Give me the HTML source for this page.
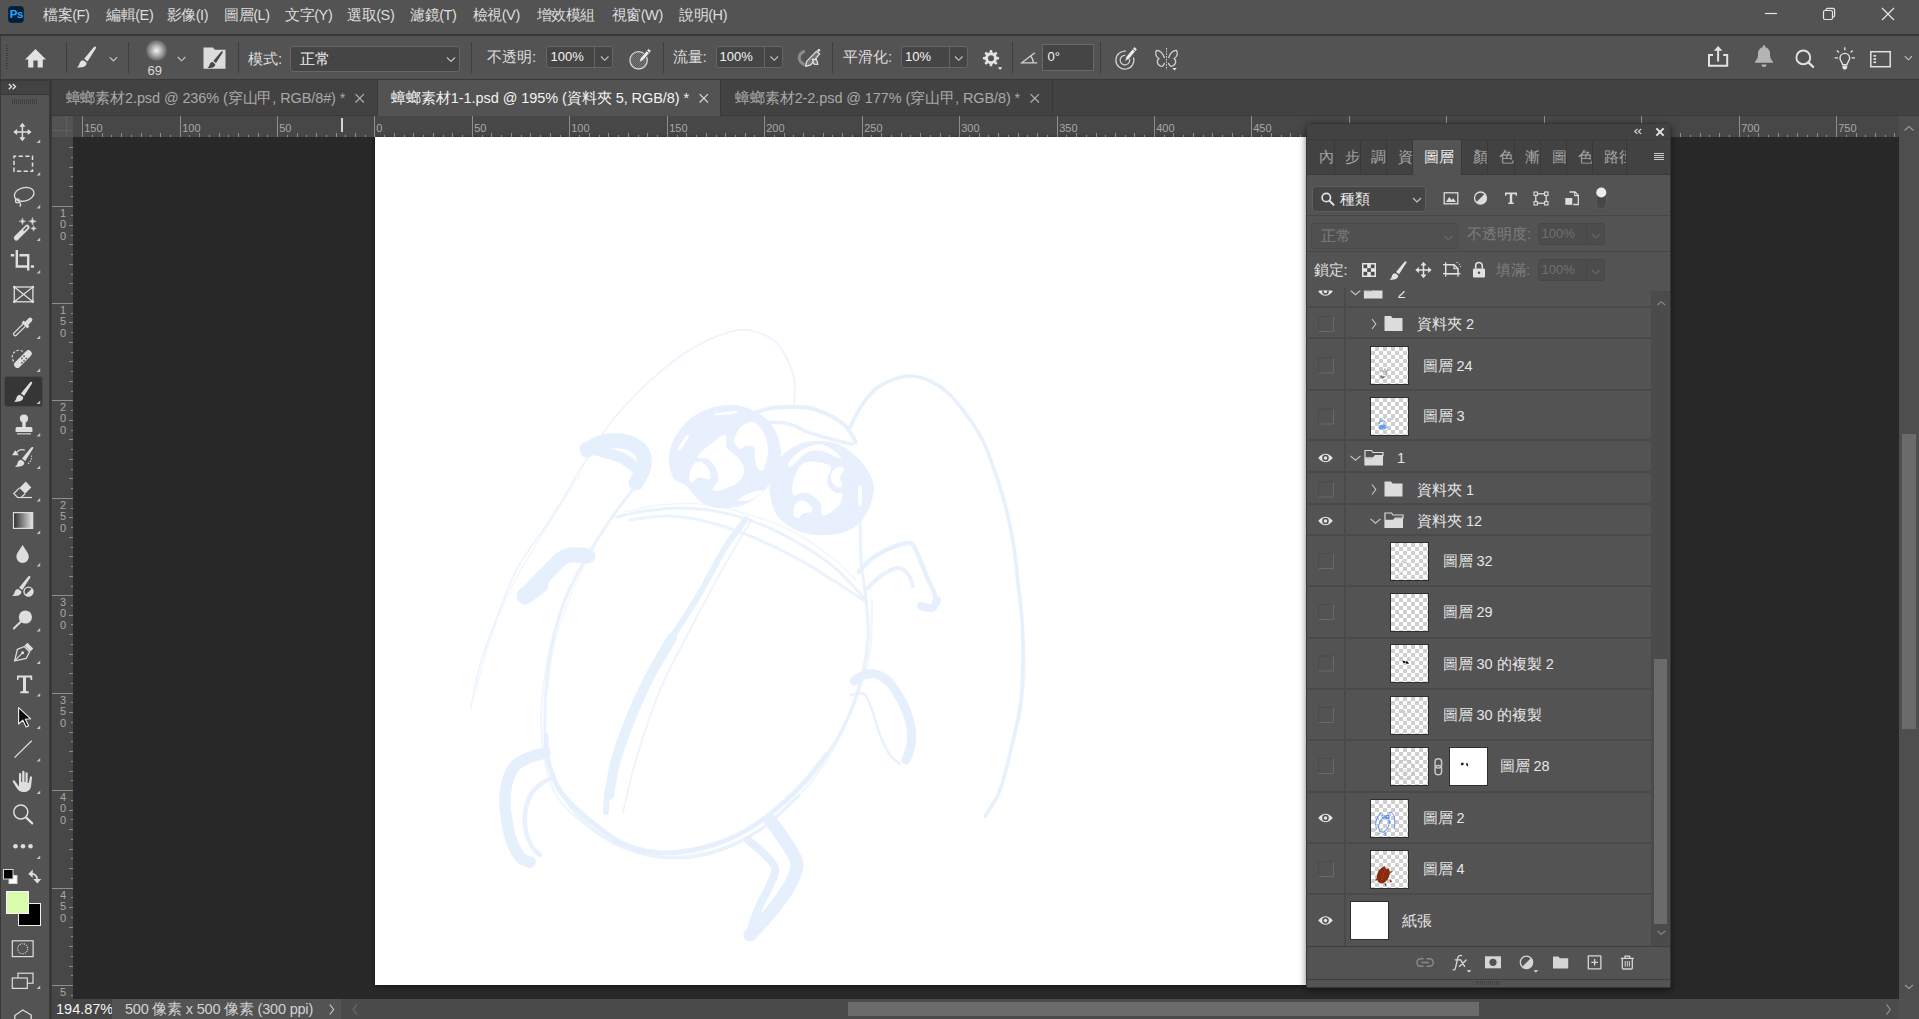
<!DOCTYPE html>
<html lang="zh-Hant"><head><meta charset="utf-8"><title>Photoshop</title>
<style>
html,body{margin:0;padding:0}
body{width:1919px;height:1019px;overflow:hidden;background:#282828;position:relative;
 font-family:"Liberation Sans",sans-serif;}
#app{position:absolute;left:0;top:0;width:1919px;height:1019px;overflow:hidden}
#app div{position:absolute;box-sizing:border-box}
#app .t{white-space:nowrap;}
#app .t .c{display:inline-block;white-space:nowrap;}
#ico,#app .ov{position:absolute;left:0;top:0;pointer-events:none}
</style></head>
<body>
<div id="app">
<div style="left:0px;top:0px;width:1919px;height:34px;background:#535353;"></div>
<div style="left:0px;top:34px;width:1919px;height:2px;background:#383838;"></div>
<div style="left:0px;top:36px;width:1919px;height:43px;background:#535353;"></div>
<div style="left:0px;top:36px;width:1px;height:43px;background:#3e3e3e;"></div>
<div style="left:0px;top:79px;width:1919px;height:1px;background:#383838;"></div>
<div style="left:0px;top:80px;width:1919px;height:36px;background:#424242;"></div>
<div style="left:0px;top:80px;width:52px;height:939px;background:#383838;"></div>
<div style="left:1px;top:81px;width:48px;height:13px;background:#424242;"></div>
<div style="left:1px;top:95px;width:48px;height:924px;background:#535353;"></div>
<div style="left:52px;top:116px;width:1847px;height:21px;background:#474747;"></div>
<div style="left:52px;top:137px;width:21px;height:862px;background:#474747;"></div>
<div style="left:52px;top:116px;width:21px;height:21px;background:#535353;"></div>
<div style="left:73px;top:137px;width:1826px;height:862px;background:#282828;"></div>
<div style="left:375px;top:137px;width:931px;height:848px;background:#ffffff;box-shadow:0 1px 4px rgba(0,0,0,.55);"></div>
<div style="left:1899px;top:116px;width:20px;height:883px;background:#4e4e4e;"></div>
<div style="left:1902px;top:434px;width:14px;height:295px;background:#6b6b6b;"></div>
<div style="left:52px;top:999px;width:1867px;height:20px;background:#535353;"></div>
<div style="left:52px;top:999px;width:60px;height:20px;background:#454545;"></div>
<div style="left:341px;top:999px;width:1558px;height:20px;background:#4b4b4b;"></div>
<div style="left:848px;top:1002px;width:631px;height:14px;background:#6b6b6b;"></div>
<div style="left:1899px;top:999px;width:20px;height:20px;background:#505050;"></div>
<div style="left:7.7px;top:6px;width:16.8px;height:17px;background:#001e36;border-radius:3.5px;border:1px solid #0a2a45"></div>
<div class="t" style="left:9.8px;top:7px;font-size:11.5px;line-height:15px;color:#31a8ff;font-weight:bold;letter-spacing:-0.5px;">Ps</div>
<div class="t" style="left:43px;top:5px;font-size:14.5px;line-height:21px;color:#dddddd;letter-spacing:-0.4px;"><span class="c" style="width:29.20px">檔案</span>(F)</div>
<div class="t" style="left:106px;top:5px;font-size:14.5px;line-height:21px;color:#dddddd;letter-spacing:-0.4px;"><span class="c" style="width:29.20px">編輯</span>(E)</div>
<div class="t" style="left:166.5px;top:5px;font-size:14.5px;line-height:21px;color:#dddddd;letter-spacing:-0.4px;"><span class="c" style="width:29.20px">影像</span>(I)</div>
<div class="t" style="left:224px;top:5px;font-size:14.5px;line-height:21px;color:#dddddd;letter-spacing:-0.4px;"><span class="c" style="width:29.20px">圖層</span>(L)</div>
<div class="t" style="left:285px;top:5px;font-size:14.5px;line-height:21px;color:#dddddd;letter-spacing:-0.4px;"><span class="c" style="width:29.20px">文字</span>(Y)</div>
<div class="t" style="left:347px;top:5px;font-size:14.5px;line-height:21px;color:#dddddd;letter-spacing:-0.4px;"><span class="c" style="width:29.20px">選取</span>(S)</div>
<div class="t" style="left:410px;top:5px;font-size:14.5px;line-height:21px;color:#dddddd;letter-spacing:-0.4px;"><span class="c" style="width:29.20px">濾鏡</span>(T)</div>
<div class="t" style="left:472.5px;top:5px;font-size:14.5px;line-height:21px;color:#dddddd;letter-spacing:-0.4px;"><span class="c" style="width:29.20px">檢視</span>(V)</div>
<div class="t" style="left:536.5px;top:5px;font-size:14.5px;line-height:21px;color:#dddddd;letter-spacing:-0.4px;"><span class="c" style="width:58.40px">增效模組</span></div>
<div class="t" style="left:611.5px;top:5px;font-size:14.5px;line-height:21px;color:#dddddd;letter-spacing:-0.4px;"><span class="c" style="width:29.20px">視窗</span>(W)</div>
<div class="t" style="left:679px;top:5px;font-size:14.5px;line-height:21px;color:#dddddd;letter-spacing:-0.4px;"><span class="c" style="width:29.20px">說明</span>(H)</div>
<div style="left:66px;top:42px;width:1px;height:31px;background:#3d3d3d;"></div>
<div style="left:128px;top:42px;width:1px;height:31px;background:#3d3d3d;"></div>
<div style="left:238px;top:42px;width:1px;height:31px;background:#3d3d3d;"></div>
<div style="left:471px;top:42px;width:1px;height:31px;background:#3d3d3d;"></div>
<div style="left:663px;top:42px;width:1px;height:31px;background:#3d3d3d;"></div>
<div style="left:832px;top:42px;width:1px;height:31px;background:#3d3d3d;"></div>
<div style="left:1012px;top:42px;width:1px;height:31px;background:#3d3d3d;"></div>
<div style="left:1100px;top:42px;width:1px;height:31px;background:#3d3d3d;"></div>
<div style="left:146px;top:40px;width:21px;height:21px;border-radius:50%;background:radial-gradient(circle at 50% 50%,#f2f2f2 0%,#bdbdbd 28%,#7c7c7c 58%,#535353 78%)"></div>
<div class="t" style="left:147.6px;top:63.5px;font-size:13px;line-height:14px;color:#dcdcdc;">69</div>
<div class="t" style="left:248px;top:49px;font-size:15px;line-height:20px;color:#dddddd;"><span class="c" style="width:30.00px">模式</span>:</div>
<div style="left:290px;top:46px;width:170px;height:26px;background:#454545;border:1px solid #666666;border-radius:3px"></div>
<div class="t" style="left:300px;top:49px;font-size:15px;line-height:20px;color:#f0f0f0;"><span class="c" style="width:30.00px">正常</span></div>
<div class="t" style="left:487px;top:47px;font-size:15px;line-height:20px;color:#dddddd;"><span class="c" style="width:45.00px">不透明</span>:</div>
<div style="left:546px;top:46px;width:67px;height:22px;background:#454545;border:1px solid #666666;border-radius:3px"></div>
<div style="left:594px;top:47px;width:1px;height:20px;background:#666666;"></div>
<div class="t" style="left:550.5px;top:49px;font-size:13px;line-height:16px;color:#f4f4f4;">100%</div>
<div class="t" style="left:672.5px;top:47px;font-size:15px;line-height:20px;color:#dddddd;"><span class="c" style="width:30.00px">流量</span>:</div>
<div style="left:716px;top:46px;width:67px;height:22px;background:#454545;border:1px solid #666666;border-radius:3px"></div>
<div style="left:764px;top:47px;width:1px;height:20px;background:#666666;"></div>
<div class="t" style="left:719.5px;top:49px;font-size:13px;line-height:16px;color:#f4f4f4;">100%</div>
<div class="t" style="left:843px;top:47px;font-size:15px;line-height:20px;color:#dddddd;"><span class="c" style="width:45.00px">平滑化</span>:</div>
<div style="left:901px;top:46px;width:67px;height:22px;background:#454545;border:1px solid #666666;border-radius:3px"></div>
<div style="left:949px;top:47px;width:1px;height:20px;background:#666666;"></div>
<div class="t" style="left:905px;top:49px;font-size:13px;line-height:16px;color:#f4f4f4;">10%</div>
<div style="left:1042px;top:44px;width:52px;height:27px;background:#454545;border:1px solid #686868"></div>
<div class="t" style="left:1047.5px;top:49px;font-size:13px;line-height:16px;color:#f4f4f4;">0°</div>
<div style="left:52px;top:80px;width:326px;height:36px;background:#424242;"></div>
<div style="left:377px;top:80px;width:1px;height:36px;background:#3a3a3a;"></div>
<div style="left:378px;top:80px;width:342px;height:36px;background:#535353;"></div>
<div style="left:720px;top:80px;width:1px;height:36px;background:#3a3a3a;"></div>
<div style="left:1052px;top:80px;width:1px;height:36px;background:#3a3a3a;"></div>
<div style="left:52px;top:115px;width:326px;height:1px;background:#3a3a3a;"></div>
<div style="left:720px;top:115px;width:1199px;height:1px;background:#3a3a3a;"></div>
<div class="t" style="left:65.5px;top:88px;font-size:14.5px;line-height:21px;color:#a9a9a9;letter-spacing:-0.11px;"><span class="c" style="width:59.56px">蟑螂素材</span>2.psd @ 236% (<span class="c" style="width:44.67px">穿山甲</span>, RGB/8#) *</div>
<div class="t" style="left:391px;top:88px;font-size:14.5px;line-height:21px;color:#f2f2f2;letter-spacing:-0.06px;"><span class="c" style="width:59.76px">蟑螂素材</span>1-1.psd @ 195% (<span class="c" style="width:44.82px">資料夾</span> 5, RGB/8) *</div>
<div class="t" style="left:735px;top:88px;font-size:14.5px;line-height:21px;color:#a9a9a9;letter-spacing:-0.09px;"><span class="c" style="width:59.64px">蟑螂素材</span>2-2.psd @ 177% (<span class="c" style="width:44.73px">穿山甲</span>, RGB/8) *</div>
<div class="t" style="left:84.2px;top:122px;font-size:11px;line-height:12px;color:#a8a8a8;">150</div>
<div class="t" style="left:182.2px;top:122px;font-size:11px;line-height:12px;color:#a8a8a8;">100</div>
<div class="t" style="left:279.2px;top:122px;font-size:11px;line-height:12px;color:#a8a8a8;">50</div>
<div class="t" style="left:376.2px;top:122px;font-size:11px;line-height:12px;color:#a8a8a8;">0</div>
<div class="t" style="left:474.2px;top:122px;font-size:11px;line-height:12px;color:#a8a8a8;">50</div>
<div class="t" style="left:571.2px;top:122px;font-size:11px;line-height:12px;color:#a8a8a8;">100</div>
<div class="t" style="left:669.2px;top:122px;font-size:11px;line-height:12px;color:#a8a8a8;">150</div>
<div class="t" style="left:766.2px;top:122px;font-size:11px;line-height:12px;color:#a8a8a8;">200</div>
<div class="t" style="left:864.2px;top:122px;font-size:11px;line-height:12px;color:#a8a8a8;">250</div>
<div class="t" style="left:961.2px;top:122px;font-size:11px;line-height:12px;color:#a8a8a8;">300</div>
<div class="t" style="left:1059.2px;top:122px;font-size:11px;line-height:12px;color:#a8a8a8;">350</div>
<div class="t" style="left:1156.2px;top:122px;font-size:11px;line-height:12px;color:#a8a8a8;">400</div>
<div class="t" style="left:1253.2px;top:122px;font-size:11px;line-height:12px;color:#a8a8a8;">450</div>
<div class="t" style="left:1741.2px;top:122px;font-size:11px;line-height:12px;color:#a8a8a8;">700</div>
<div class="t" style="left:1838.2px;top:122px;font-size:11px;line-height:12px;color:#a8a8a8;">750</div>
<div class="t" style="left:59px;top:206.5px;font-size:11px;line-height:12px;color:#a8a8a8;width:8px;text-align:center;">1</div>
<div class="t" style="left:59px;top:218.0px;font-size:11px;line-height:12px;color:#a8a8a8;width:8px;text-align:center;">0</div>
<div class="t" style="left:59px;top:229.5px;font-size:11px;line-height:12px;color:#a8a8a8;width:8px;text-align:center;">0</div>
<div class="t" style="left:59px;top:303.5px;font-size:11px;line-height:12px;color:#a8a8a8;width:8px;text-align:center;">1</div>
<div class="t" style="left:59px;top:315.0px;font-size:11px;line-height:12px;color:#a8a8a8;width:8px;text-align:center;">5</div>
<div class="t" style="left:59px;top:326.5px;font-size:11px;line-height:12px;color:#a8a8a8;width:8px;text-align:center;">0</div>
<div class="t" style="left:59px;top:400.5px;font-size:11px;line-height:12px;color:#a8a8a8;width:8px;text-align:center;">2</div>
<div class="t" style="left:59px;top:412.0px;font-size:11px;line-height:12px;color:#a8a8a8;width:8px;text-align:center;">0</div>
<div class="t" style="left:59px;top:423.5px;font-size:11px;line-height:12px;color:#a8a8a8;width:8px;text-align:center;">0</div>
<div class="t" style="left:59px;top:498.5px;font-size:11px;line-height:12px;color:#a8a8a8;width:8px;text-align:center;">2</div>
<div class="t" style="left:59px;top:510.0px;font-size:11px;line-height:12px;color:#a8a8a8;width:8px;text-align:center;">5</div>
<div class="t" style="left:59px;top:521.5px;font-size:11px;line-height:12px;color:#a8a8a8;width:8px;text-align:center;">0</div>
<div class="t" style="left:59px;top:595.5px;font-size:11px;line-height:12px;color:#a8a8a8;width:8px;text-align:center;">3</div>
<div class="t" style="left:59px;top:607.0px;font-size:11px;line-height:12px;color:#a8a8a8;width:8px;text-align:center;">0</div>
<div class="t" style="left:59px;top:618.5px;font-size:11px;line-height:12px;color:#a8a8a8;width:8px;text-align:center;">0</div>
<div class="t" style="left:59px;top:693.5px;font-size:11px;line-height:12px;color:#a8a8a8;width:8px;text-align:center;">3</div>
<div class="t" style="left:59px;top:705.0px;font-size:11px;line-height:12px;color:#a8a8a8;width:8px;text-align:center;">5</div>
<div class="t" style="left:59px;top:716.5px;font-size:11px;line-height:12px;color:#a8a8a8;width:8px;text-align:center;">0</div>
<div class="t" style="left:59px;top:790.5px;font-size:11px;line-height:12px;color:#a8a8a8;width:8px;text-align:center;">4</div>
<div class="t" style="left:59px;top:802.0px;font-size:11px;line-height:12px;color:#a8a8a8;width:8px;text-align:center;">0</div>
<div class="t" style="left:59px;top:813.5px;font-size:11px;line-height:12px;color:#a8a8a8;width:8px;text-align:center;">0</div>
<div class="t" style="left:59px;top:888.5px;font-size:11px;line-height:12px;color:#a8a8a8;width:8px;text-align:center;">4</div>
<div class="t" style="left:59px;top:900.0px;font-size:11px;line-height:12px;color:#a8a8a8;width:8px;text-align:center;">5</div>
<div class="t" style="left:59px;top:911.5px;font-size:11px;line-height:12px;color:#a8a8a8;width:8px;text-align:center;">0</div>
<div class="t" style="left:59px;top:985.5px;font-size:11px;line-height:12px;color:#a8a8a8;width:8px;text-align:center;">5</div>
<svg class="ov" width="1919" height="1019" viewBox="0 0 1919 1019"><g fill="#8e8e8e"><rect x="82" y="116" width="1" height="21"/><rect x="92" y="135" width="1" height="2"/><rect x="102" y="133" width="1" height="4"/><rect x="111" y="135" width="1" height="2"/><rect x="121" y="133" width="1" height="4"/><rect x="131" y="135" width="1" height="2"/><rect x="141" y="133" width="1" height="4"/><rect x="150" y="135" width="1" height="2"/><rect x="160" y="133" width="1" height="4"/><rect x="170" y="135" width="1" height="2"/><rect x="180" y="116" width="1" height="21"/><rect x="189" y="135" width="1" height="2"/><rect x="199" y="133" width="1" height="4"/><rect x="209" y="135" width="1" height="2"/><rect x="219" y="133" width="1" height="4"/><rect x="228" y="135" width="1" height="2"/><rect x="238" y="133" width="1" height="4"/><rect x="248" y="135" width="1" height="2"/><rect x="258" y="133" width="1" height="4"/><rect x="267" y="135" width="1" height="2"/><rect x="277" y="116" width="1" height="21"/><rect x="287" y="135" width="1" height="2"/><rect x="297" y="133" width="1" height="4"/><rect x="306" y="135" width="1" height="2"/><rect x="316" y="133" width="1" height="4"/><rect x="326" y="135" width="1" height="2"/><rect x="336" y="133" width="1" height="4"/><rect x="345" y="135" width="1" height="2"/><rect x="355" y="133" width="1" height="4"/><rect x="365" y="135" width="1" height="2"/><rect x="374" y="116" width="1" height="21"/><rect x="384" y="135" width="1" height="2"/><rect x="394" y="133" width="1" height="4"/><rect x="404" y="135" width="1" height="2"/><rect x="413" y="133" width="1" height="4"/><rect x="423" y="135" width="1" height="2"/><rect x="433" y="133" width="1" height="4"/><rect x="443" y="135" width="1" height="2"/><rect x="452" y="133" width="1" height="4"/><rect x="462" y="135" width="1" height="2"/><rect x="472" y="116" width="1" height="21"/><rect x="482" y="135" width="1" height="2"/><rect x="491" y="133" width="1" height="4"/><rect x="501" y="135" width="1" height="2"/><rect x="511" y="133" width="1" height="4"/><rect x="521" y="135" width="1" height="2"/><rect x="530" y="133" width="1" height="4"/><rect x="540" y="135" width="1" height="2"/><rect x="550" y="133" width="1" height="4"/><rect x="560" y="135" width="1" height="2"/><rect x="569" y="116" width="1" height="21"/><rect x="579" y="135" width="1" height="2"/><rect x="589" y="133" width="1" height="4"/><rect x="599" y="135" width="1" height="2"/><rect x="608" y="133" width="1" height="4"/><rect x="618" y="135" width="1" height="2"/><rect x="628" y="133" width="1" height="4"/><rect x="638" y="135" width="1" height="2"/><rect x="647" y="133" width="1" height="4"/><rect x="657" y="135" width="1" height="2"/><rect x="667" y="116" width="1" height="21"/><rect x="677" y="135" width="1" height="2"/><rect x="686" y="133" width="1" height="4"/><rect x="696" y="135" width="1" height="2"/><rect x="706" y="133" width="1" height="4"/><rect x="716" y="135" width="1" height="2"/><rect x="725" y="133" width="1" height="4"/><rect x="735" y="135" width="1" height="2"/><rect x="745" y="133" width="1" height="4"/><rect x="754" y="135" width="1" height="2"/><rect x="764" y="116" width="1" height="21"/><rect x="774" y="135" width="1" height="2"/><rect x="784" y="133" width="1" height="4"/><rect x="793" y="135" width="1" height="2"/><rect x="803" y="133" width="1" height="4"/><rect x="813" y="135" width="1" height="2"/><rect x="823" y="133" width="1" height="4"/><rect x="832" y="135" width="1" height="2"/><rect x="842" y="133" width="1" height="4"/><rect x="852" y="135" width="1" height="2"/><rect x="862" y="116" width="1" height="21"/><rect x="871" y="135" width="1" height="2"/><rect x="881" y="133" width="1" height="4"/><rect x="891" y="135" width="1" height="2"/><rect x="901" y="133" width="1" height="4"/><rect x="910" y="135" width="1" height="2"/><rect x="920" y="133" width="1" height="4"/><rect x="930" y="135" width="1" height="2"/><rect x="940" y="133" width="1" height="4"/><rect x="949" y="135" width="1" height="2"/><rect x="959" y="116" width="1" height="21"/><rect x="969" y="135" width="1" height="2"/><rect x="979" y="133" width="1" height="4"/><rect x="988" y="135" width="1" height="2"/><rect x="998" y="133" width="1" height="4"/><rect x="1008" y="135" width="1" height="2"/><rect x="1018" y="133" width="1" height="4"/><rect x="1027" y="135" width="1" height="2"/><rect x="1037" y="133" width="1" height="4"/><rect x="1047" y="135" width="1" height="2"/><rect x="1057" y="116" width="1" height="21"/><rect x="1066" y="135" width="1" height="2"/><rect x="1076" y="133" width="1" height="4"/><rect x="1086" y="135" width="1" height="2"/><rect x="1096" y="133" width="1" height="4"/><rect x="1105" y="135" width="1" height="2"/><rect x="1115" y="133" width="1" height="4"/><rect x="1125" y="135" width="1" height="2"/><rect x="1134" y="133" width="1" height="4"/><rect x="1144" y="135" width="1" height="2"/><rect x="1154" y="116" width="1" height="21"/><rect x="1164" y="135" width="1" height="2"/><rect x="1173" y="133" width="1" height="4"/><rect x="1183" y="135" width="1" height="2"/><rect x="1193" y="133" width="1" height="4"/><rect x="1203" y="135" width="1" height="2"/><rect x="1212" y="133" width="1" height="4"/><rect x="1222" y="135" width="1" height="2"/><rect x="1232" y="133" width="1" height="4"/><rect x="1242" y="135" width="1" height="2"/><rect x="1251" y="116" width="1" height="21"/><rect x="1261" y="135" width="1" height="2"/><rect x="1271" y="133" width="1" height="4"/><rect x="1281" y="135" width="1" height="2"/><rect x="1290" y="133" width="1" height="4"/><rect x="1300" y="135" width="1" height="2"/><rect x="1310" y="133" width="1" height="4"/><rect x="1320" y="135" width="1" height="2"/><rect x="1329" y="133" width="1" height="4"/><rect x="1339" y="135" width="1" height="2"/><rect x="1349" y="116" width="1" height="21"/><rect x="1359" y="135" width="1" height="2"/><rect x="1368" y="133" width="1" height="4"/><rect x="1378" y="135" width="1" height="2"/><rect x="1388" y="133" width="1" height="4"/><rect x="1398" y="135" width="1" height="2"/><rect x="1407" y="133" width="1" height="4"/><rect x="1417" y="135" width="1" height="2"/><rect x="1427" y="133" width="1" height="4"/><rect x="1437" y="135" width="1" height="2"/><rect x="1446" y="116" width="1" height="21"/><rect x="1456" y="135" width="1" height="2"/><rect x="1466" y="133" width="1" height="4"/><rect x="1476" y="135" width="1" height="2"/><rect x="1485" y="133" width="1" height="4"/><rect x="1495" y="135" width="1" height="2"/><rect x="1505" y="133" width="1" height="4"/><rect x="1514" y="135" width="1" height="2"/><rect x="1524" y="133" width="1" height="4"/><rect x="1534" y="135" width="1" height="2"/><rect x="1544" y="116" width="1" height="21"/><rect x="1553" y="135" width="1" height="2"/><rect x="1563" y="133" width="1" height="4"/><rect x="1573" y="135" width="1" height="2"/><rect x="1583" y="133" width="1" height="4"/><rect x="1592" y="135" width="1" height="2"/><rect x="1602" y="133" width="1" height="4"/><rect x="1612" y="135" width="1" height="2"/><rect x="1622" y="133" width="1" height="4"/><rect x="1631" y="135" width="1" height="2"/><rect x="1641" y="116" width="1" height="21"/><rect x="1651" y="135" width="1" height="2"/><rect x="1661" y="133" width="1" height="4"/><rect x="1670" y="135" width="1" height="2"/><rect x="1680" y="133" width="1" height="4"/><rect x="1690" y="135" width="1" height="2"/><rect x="1700" y="133" width="1" height="4"/><rect x="1709" y="135" width="1" height="2"/><rect x="1719" y="133" width="1" height="4"/><rect x="1729" y="135" width="1" height="2"/><rect x="1739" y="116" width="1" height="21"/><rect x="1748" y="135" width="1" height="2"/><rect x="1758" y="133" width="1" height="4"/><rect x="1768" y="135" width="1" height="2"/><rect x="1778" y="133" width="1" height="4"/><rect x="1787" y="135" width="1" height="2"/><rect x="1797" y="133" width="1" height="4"/><rect x="1807" y="135" width="1" height="2"/><rect x="1817" y="133" width="1" height="4"/><rect x="1826" y="135" width="1" height="2"/><rect x="1836" y="116" width="1" height="21"/><rect x="1846" y="135" width="1" height="2"/><rect x="1856" y="133" width="1" height="4"/><rect x="1865" y="135" width="1" height="2"/><rect x="1875" y="133" width="1" height="4"/><rect x="1885" y="135" width="1" height="2"/><rect x="1894" y="133" width="1" height="4"/><rect x="69" y="147" width="4" height="1"/><rect x="71" y="157" width="2" height="1"/><rect x="69" y="167" width="4" height="1"/><rect x="71" y="176" width="2" height="1"/><rect x="69" y="186" width="4" height="1"/><rect x="71" y="196" width="2" height="1"/><rect x="52" y="206" width="21" height="1"/><rect x="71" y="215" width="2" height="1"/><rect x="69" y="225" width="4" height="1"/><rect x="71" y="235" width="2" height="1"/><rect x="69" y="244" width="4" height="1"/><rect x="71" y="254" width="2" height="1"/><rect x="69" y="264" width="4" height="1"/><rect x="71" y="274" width="2" height="1"/><rect x="69" y="283" width="4" height="1"/><rect x="71" y="293" width="2" height="1"/><rect x="52" y="303" width="21" height="1"/><rect x="71" y="313" width="2" height="1"/><rect x="69" y="322" width="4" height="1"/><rect x="71" y="332" width="2" height="1"/><rect x="69" y="342" width="4" height="1"/><rect x="71" y="352" width="2" height="1"/><rect x="69" y="361" width="4" height="1"/><rect x="71" y="371" width="2" height="1"/><rect x="69" y="381" width="4" height="1"/><rect x="71" y="391" width="2" height="1"/><rect x="52" y="400" width="21" height="1"/><rect x="71" y="410" width="2" height="1"/><rect x="69" y="420" width="4" height="1"/><rect x="71" y="430" width="2" height="1"/><rect x="69" y="439" width="4" height="1"/><rect x="71" y="449" width="2" height="1"/><rect x="69" y="459" width="4" height="1"/><rect x="71" y="469" width="2" height="1"/><rect x="69" y="478" width="4" height="1"/><rect x="71" y="488" width="2" height="1"/><rect x="52" y="498" width="21" height="1"/><rect x="71" y="508" width="2" height="1"/><rect x="69" y="517" width="4" height="1"/><rect x="71" y="527" width="2" height="1"/><rect x="69" y="537" width="4" height="1"/><rect x="71" y="547" width="2" height="1"/><rect x="69" y="556" width="4" height="1"/><rect x="71" y="566" width="2" height="1"/><rect x="69" y="576" width="4" height="1"/><rect x="71" y="586" width="2" height="1"/><rect x="52" y="595" width="21" height="1"/><rect x="71" y="605" width="2" height="1"/><rect x="69" y="615" width="4" height="1"/><rect x="71" y="624" width="2" height="1"/><rect x="69" y="634" width="4" height="1"/><rect x="71" y="644" width="2" height="1"/><rect x="69" y="654" width="4" height="1"/><rect x="71" y="663" width="2" height="1"/><rect x="69" y="673" width="4" height="1"/><rect x="71" y="683" width="2" height="1"/><rect x="52" y="693" width="21" height="1"/><rect x="71" y="702" width="2" height="1"/><rect x="69" y="712" width="4" height="1"/><rect x="71" y="722" width="2" height="1"/><rect x="69" y="732" width="4" height="1"/><rect x="71" y="741" width="2" height="1"/><rect x="69" y="751" width="4" height="1"/><rect x="71" y="761" width="2" height="1"/><rect x="69" y="771" width="4" height="1"/><rect x="71" y="780" width="2" height="1"/><rect x="52" y="790" width="21" height="1"/><rect x="71" y="800" width="2" height="1"/><rect x="69" y="810" width="4" height="1"/><rect x="71" y="819" width="2" height="1"/><rect x="69" y="829" width="4" height="1"/><rect x="71" y="839" width="2" height="1"/><rect x="69" y="849" width="4" height="1"/><rect x="71" y="858" width="2" height="1"/><rect x="69" y="868" width="4" height="1"/><rect x="71" y="878" width="2" height="1"/><rect x="52" y="888" width="21" height="1"/><rect x="71" y="897" width="2" height="1"/><rect x="69" y="907" width="4" height="1"/><rect x="71" y="917" width="2" height="1"/><rect x="69" y="927" width="4" height="1"/><rect x="71" y="936" width="2" height="1"/><rect x="69" y="946" width="4" height="1"/><rect x="71" y="956" width="2" height="1"/><rect x="69" y="966" width="4" height="1"/><rect x="71" y="975" width="2" height="1"/><rect x="52" y="985" width="21" height="1"/><rect x="71" y="995" width="2" height="1"/></g></svg>
<div style="left:341px;top:118px;width:2px;height:14px;background:#d4d4d4;"></div>
<div class="t" style="left:56px;top:999px;font-size:14.5px;line-height:20px;color:#f4f4f4;width:55.5px;overflow:hidden;">194.87%</div>
<div class="t" style="left:125px;top:999px;font-size:14.5px;line-height:20px;color:#d2d2d2;letter-spacing:-0.2px;">500 <span class="c" style="width:29.60px">像素</span> x 500 <span class="c" style="width:29.60px">像素</span> (300 ppi)</div>
<svg class="ov" width="1919" height="1019" viewBox="0 0 1919 1019"><g fill="none" stroke="#e6f0fc" stroke-linecap="round" stroke-linejoin="round"><path d="M471 708C472.5 700.8 475.7 680.2 480 665C484.3 649.8 490.7 633.3 497 617C503.3 600.7 509.2 583.2 518 567C526.8 550.8 538.3 538.3 550 520C561.7 501.7 577 474.3 588 457C599 439.7 604 430.2 616 416C628 401.8 646 384 660 372C674 360 686.8 351 700 344C713.2 337 728.2 331.5 739 330C749.8 328.5 757.8 331.7 765 335C772.2 338.3 777.2 342.8 782 350C786.8 357.2 792 368.7 794 378C796 387.3 794 401.3 794 406" stroke-width="1.6" opacity="0.8"/><path d="M476 690C478.3 681.7 484.3 656.7 490 640C495.7 623.3 500.8 608.3 510 590C519.2 571.7 533.3 549.2 545 530C556.7 510.8 574.2 484.2 580 475" stroke-width="1.2" opacity="0.6"/><path d="M548 690C548.8 683.3 550.2 663.3 553 650C555.8 636.7 559.7 624.2 565 610C570.3 595.8 577.5 580 585 565C592.5 550 600.8 534.2 610 520C619.2 505.8 635 486.7 640 480" stroke-width="1.2" opacity="0.55"/><path d="M850 427C852 423.3 857.5 411.5 862 405C866.5 398.5 871.5 392.3 877 388C882.5 383.7 889.2 381 895 379C900.8 377 906.2 375.7 912 376C917.8 376.3 924.2 378.3 930 381C935.8 383.7 941 386.5 947 392C953 397.5 960 405.8 966 414C972 422.2 978 430.8 983 441C988 451.2 992 463.2 996 475C1000 486.8 1004 499.8 1007 512C1010 524.2 1012.2 536.2 1014 548C1015.8 559.8 1016.7 571 1018 583C1019.3 595 1021.2 607.7 1022 620C1022.8 632.3 1023.2 643.7 1023 657C1022.8 670.3 1022.7 686 1021 700C1019.3 714 1016.5 726 1013 741C1009.5 756 1004.7 777.5 1000 790C995.3 802.5 987.5 811.7 985 816" stroke-width="3.6" opacity="0.95"/><path d="M1016 560C1017 570 1020.5 601.7 1022 620C1023.5 638.3 1025.3 653.3 1025 670C1024.7 686.7 1020.8 711.7 1020 720" stroke-width="1.4" opacity="0.6"/><path d="M756.8 412C759.9 411.3 767.3 408.3 775.6 407.6C784 406.9 797.9 406.2 807.1 407.6C816.2 409 824.1 412.7 830.6 415.9C837.2 419.1 842.1 422.6 846.3 426.9C850.5 431.2 854.2 439.3 855.7 441.8" stroke-width="4" opacity="0.95"/><path d="M769.4 422.2C772.5 422.5 781.7 422.1 788.2 423.8C794.8 425.5 801.6 429.9 808.6 432.4C815.7 434.9 823.3 436.7 830.6 438.7C837.9 440.7 848.9 443.3 852.6 444.2" stroke-width="3.5" opacity="0.9"/><g><path d="M668.8 457.5C669.1 450.7 671.5 443.7 675.1 437.1C678.8 430.6 684.6 423.2 690.8 418.3C697.1 413.3 705.5 409.5 712.8 407.3C720.2 405.1 727.5 404.1 734.8 404.9C742.1 405.7 750.5 408.5 756.8 412C763.1 415.5 768.6 420.4 772.5 426.1C776.4 431.9 779.3 440 780.4 446.5C781.4 453.1 780.6 459.1 778.8 465.4C777 471.7 773.6 478.5 769.4 484.2C765.2 490 759.9 496 753.7 499.9C747.4 503.9 739 506.7 731.7 507.8C724.3 508.8 715.4 507.8 709.7 506.2C703.9 504.7 701 501.8 697.1 498.4C693.2 495 690.1 489.2 686.1 485.8C682.2 482.4 676.4 482.7 673.6 478C670.7 473.2 668.6 464.3 668.8 457.5z" fill="#e7f0fc" opacity="1" stroke="none"/><path d="M697.1 456.8C697.9 453.9 708.1 446.3 712.8 442.6C717.5 439 723 433.8 725.4 434.8C727.8 435.7 725.2 444.3 727.3 448.1C729.4 451.9 735.1 453.9 738 457.5C740.8 461.2 744.2 465.9 744.2 470.1C744.2 474.3 742.1 479.3 738 482.7C733.8 486.1 723.3 489.5 719.1 490.5C714.9 491.5 713 490.2 712.8 488.6C712.6 487.1 717.3 484.4 717.8 481.1C718.4 477.7 717.5 472.1 716 468.5C714.4 464.9 711.6 461.4 708.4 459.4C705.3 457.5 696.4 459.6 697.1 456.8z" fill="#ffffff" opacity="1" stroke="none"/><path d="M735.6 435.5C736.8 432.9 738.1 428.7 741.1 426.4C744.1 424.2 749.9 421.2 753.7 422.2C757.4 423.2 761 427.8 763.4 432.4C765.8 437 768 443.7 768.1 449.7C768.2 455.7 765.6 464.9 764 468.2C762.4 471.5 759.9 471.3 758.4 469.5C756.8 467.7 755.3 461.2 754.6 457.5C753.9 453.9 755.8 449.4 754.3 447.5C752.8 445.5 748.1 445.7 745.8 445.9C743.5 446.2 742.3 449.6 740.3 449.1C738.3 448.5 734.7 444.9 733.9 442.6C733.1 440.4 734.4 438.2 735.6 435.5z" fill="#ffffff" opacity="1" stroke="none"/><path d="M689.3 474.8C689.7 471.7 691.9 465.9 694 463.8C696.1 461.7 699.3 461.2 701.8 462.2C704.3 463.3 707.7 467.3 709.1 470.1C710.4 472.9 711.4 477.7 709.7 478.9C708 480.1 701.7 476.7 698.7 477.3C695.7 478 693 483.1 691.5 482.7C689.9 482.2 688.8 478 689.3 474.8z" fill="#ffffff" opacity="1" stroke="none"/><path d="M738 500.3C737.3 499.3 744 495.3 748.2 493.7C752.4 492 762.4 489.5 763.1 490.5C763.7 491.5 756.3 498 752.1 499.6C747.9 501.3 738.6 501.3 738 500.3z" fill="#ffffff" opacity="1" stroke="none"/><path d="M678 448.4C678.8 446.1 684.3 437.4 686.1 435.5C687.9 433.7 689.5 435.1 688.6 437.4C687.7 439.7 682.6 447.5 680.8 449.4C679 451.2 677.1 450.7 678 448.4z" fill="#ffffff" opacity="1" stroke="none"/><path d="M716 413.6C718.9 412.9 731.5 411 734.8 411C738.1 411 738.7 412.9 735.8 413.6C732.8 414.3 720.2 415.3 716.9 415.3C713.6 415.3 713 414.3 716 413.6z" fill="#ffffff" opacity="1" stroke="none"/><path d="M769.4 487.4C769.4 480.6 771.5 474.3 774.1 468.5C776.7 462.8 780.6 457 785.1 452.8C789.5 448.6 795 445.4 800.8 443.4C806.5 441.4 813.3 440.9 819.6 441C825.9 441.2 832.5 441.7 838.5 444.2C844.5 446.7 850.8 451.4 855.7 456C860.7 460.5 865.3 466.4 868.3 471.7C871.3 476.9 873.5 481.6 873.8 487.4C874.1 493.1 872.1 500.5 869.9 506.2C867.7 512 864.6 517.6 860.5 521.9C856.3 526.2 851 529.9 844.8 532.1C838.5 534.4 830.1 535.3 822.8 535.3C815.4 535.3 807.3 534.4 800.8 532.1C794.2 529.9 788 525.7 783.5 521.9C779.1 518.1 776.4 515.1 774.1 509.4C771.7 503.6 769.4 494.2 769.4 487.4z" fill="#e7f0fc" opacity="1" stroke="none"/><path d="M794.5 478C795.9 474.3 797.9 468.1 800.8 465.4C803.7 462.6 806.8 461.3 811.8 461.5C816.7 461.6 828 463.4 830.6 466.2C833.2 468.9 827.9 474.7 827.5 478C827.1 481.2 826.8 483.3 828.3 485.8C829.7 488.3 833.8 491.6 836.1 492.9C838.5 494.2 842 491.4 842.4 493.7C842.8 495.9 841.7 502.6 838.5 506.2C835.2 509.9 825.8 516.2 822.8 515.6C819.8 515.1 822.5 506.6 820.4 503.1C818.3 499.5 813.5 496.1 810.2 494.4C806.9 492.7 803.5 492.7 800.8 492.9C798 493 795.1 496.1 793.7 495.2C792.3 494.3 792 490.3 792.1 487.4C792.3 484.5 793.1 481.6 794.5 478z" fill="#ffffff" opacity="1" stroke="none"/><path d="M832.2 471.7C833.4 469.6 836.5 467.5 838.5 467C840.5 466.4 843.9 466.7 844.1 468.5C844.4 470.4 840.3 475.1 840 478C839.8 480.8 843.1 484.3 842.6 485.8C842 487.3 838.8 487.8 836.9 486.7C835 485.7 832.2 482 831.4 479.5C830.6 477 831 473.8 832.2 471.7z" fill="#ffffff" opacity="1" stroke="none"/><path d="M793.7 509.4C794.2 507.1 795.1 503.7 796.9 502.3C798.6 500.9 801.4 499.9 803.9 500.7C806.4 501.5 810.6 505.2 811.8 507C813 508.9 812.6 510.8 811.1 511.9C809.7 513 805.4 512.4 803.3 513.4C801.2 514.5 800.2 517.6 798.6 518C797 518.4 794.5 517.1 793.7 515.6C792.9 514.2 793.2 511.6 793.7 509.4z" fill="#ffffff" opacity="1" stroke="none"/><path d="M788.2 463.8C789.7 461.3 795.5 453.7 800.8 450.5C806 447.2 813.9 444 819.6 444.2C825.4 444.4 831.9 449.1 835.3 451.6C838.8 454.1 842.5 459.2 840.4 459.1C838.3 459.1 828.3 452.4 822.8 451.3C817.2 450.2 812.2 450.1 807.1 452.5C802 454.9 795.3 463.8 792.1 465.7C789 467.6 786.8 466.4 788.2 463.8z" fill="#ffffff" opacity="1" stroke="none"/><path d="M858.1 487.4C858.5 484.1 860.6 484.5 861.2 486.6C861.9 488.7 862.4 496.6 862 499.9C861.6 503.3 859.5 508.6 858.9 506.5C858.2 504.4 857.7 490.7 858.1 487.4z" fill="#ffffff" opacity="1" stroke="none"/></g><path d="M587 450C589.7 448.7 596.5 443.3 603 442C609.5 440.7 619.7 440.5 626 442C632.3 443.5 638 447 641 451C644 455 644.8 460.7 644 466C643.2 471.3 637.3 480.2 636 483" stroke-width="15" opacity="1"/><path d="M585 448C587.5 448.5 593.8 449.3 600 451C606.2 452.7 616 455.2 622 458C628 460.8 633.7 466.3 636 468" stroke-width="11" opacity="1"/><path d="M527 594C530 590.8 538.5 581.3 545 575C551.5 568.7 558.8 559.2 566 556C573.2 552.8 584.3 556 588 556" stroke-width="15" opacity="1"/><path d="M525 596C527.5 594.2 537.5 586.8 540 585" stroke-width="17" opacity="1"/><path d="M616 517C620.8 516 634.3 512.5 645 511C655.7 509.5 667.5 507.8 680 508C692.5 508.2 706.7 509.3 720 512C733.3 514.7 746.7 518.7 760 524C773.3 529.3 787.5 536.7 800 544C812.5 551.3 824 558.7 835 568C846 577.3 860.8 594.7 866 600" stroke-width="2.8" opacity="0.85"/><path d="M625 512C630.8 510.8 647.5 506.3 660 505C672.5 503.7 686.7 502.8 700 504C713.3 505.2 725 507.7 740 512C755 516.3 775 522.7 790 530C805 537.3 819 547.7 830 556C841 564.3 851.7 576 856 580" stroke-width="1.5" opacity="0.6"/><path d="M630 520C635.8 519.3 653.3 516 665 516C676.7 516 685.8 516.7 700 520C714.2 523.3 733.3 529.3 750 536C766.7 542.7 784.2 551.3 800 560C815.8 568.7 834 581 845 588C856 595 862.5 599.7 866 602" stroke-width="3" opacity="0.8"/><path d="M746 519C742.5 523.8 732.7 535.7 725 548C717.3 560.3 707.5 580.2 700 593C692.5 605.8 686 615.5 680 625C674 634.5 671 637.7 664 650C657 662.3 645.3 683.2 638 699C630.7 714.8 625 729.8 620 745C615 760.2 610.3 778.8 608 790C605.7 801.2 606.3 808.3 606 812" stroke-width="6" opacity="0.95"/><path d="M672 638C668.3 644.3 657 662.3 650 676C643 689.7 635.7 706 630 720C624.3 734 619.5 747.5 616 760C612.5 772.5 610.2 789.2 609 795" stroke-width="10" opacity="0.95"/><path d="M752 519C747 527.5 732.3 551.5 722 570C711.7 588.5 700.3 610 690 630C679.7 650 669 668.3 660 690C651 711.7 642.2 739.7 636 760C629.8 780.3 625.2 803.3 623 812" stroke-width="1.8" opacity="0.7"/><path d="M640 480C635 486.7 619.2 506.7 610 520C600.8 533.3 592.5 546.7 585 560C577.5 573.3 570.5 585.8 565 600C559.5 614.2 555.2 630 552 645C548.8 660 547.2 675 546 690C544.8 705 544.7 723.3 545 735C545.3 746.7 545.5 750.7 548 760C550.5 769.3 553.3 781.2 560 791C566.7 800.8 577.3 810.2 588 819C598.7 827.8 611 838.3 624 844C637 849.7 650.7 853 666 853C681.3 853 700.7 849 716 844C731.3 839 744 832.5 758 823C772 813.5 787 800.7 800 787C813 773.3 826.3 757.2 836 741C845.7 724.8 852.7 706.8 858 690C863.3 673.2 866.7 655 868 640C869.3 625 867.2 613.3 866 600C864.8 586.7 862 573.5 861 560C860 546.5 860.2 525.8 860 519" stroke-width="3" opacity="0.85"/><path d="M570 585C567 594.2 556.7 620.8 552 640C547.3 659.2 543.5 681.7 542 700C540.5 718.3 540.7 734.2 543 750C545.3 765.8 548.2 782 556 795C563.8 808 576 818.5 590 828C604 837.5 623.3 847 640 852C656.7 857 673.3 859.7 690 858C706.7 856.3 723.3 850.8 740 842C756.7 833.2 775 819.5 790 805C805 790.5 819 772.5 830 755C841 737.5 849.3 717.5 856 700C862.7 682.5 867.3 666.7 870 650C872.7 633.3 871.7 608.3 872 600" stroke-width="2" opacity="0.6"/><path d="M546 735C546.3 739.2 545.7 750.7 548 760C550.3 769.3 553.3 781.2 560 791C566.7 800.8 577.3 810.2 588 819C598.7 827.8 611 838.3 624 844C637 849.7 650.7 853 666 853C681.3 853 700.7 849 716 844C731.3 839 744 832.5 758 823C772 813.5 788.7 798.3 800 787C811.3 775.7 821.7 760.3 826 755" stroke-width="5" opacity="0.9"/><path d="M552 775C555.8 781.2 565 800.8 575 812C585 823.2 597.8 834.5 612 842C626.2 849.5 643.3 855.3 660 857C676.7 858.7 695.3 856.5 712 852C728.7 847.5 745.7 839.3 760 830C774.3 820.7 791.7 801.7 798 796" stroke-width="3.5" opacity="0.8"/><path d="M859 572C860.8 570 865.8 563.5 870 560C874.2 556.5 879.2 553.5 884 551C888.8 548.5 894.3 546.2 899 545C903.7 543.8 908.5 541.5 912 544C915.5 546.5 917.5 554.5 920 560C922.5 565.5 924.7 571.7 927 577C929.3 582.3 932.5 587.7 934 592C935.5 596.3 935.7 601.2 936 603" stroke-width="4.5" opacity="0.95"/><path d="M868 588C870.3 585.8 877 578.3 882 575C887 571.7 893.7 568.2 898 568C902.3 567.8 905.5 571 908 574C910.5 577 912.2 584 913 586" stroke-width="4" opacity="0.9"/><path d="M937 600C936.2 601.3 934.7 607 932 608C929.3 609 922.8 606.3 921 606" stroke-width="8" opacity="1"/><path d="M854 681C855.7 680 860.3 676.2 864 675C867.7 673.8 872 673 876 674C880 675 884.5 677.8 888 681C891.5 684.2 894 688.2 897 693C900 697.8 903.7 704.2 906 710C908.3 715.8 910.2 722.2 911 728C911.8 733.8 911.8 739.7 911 745C910.2 750.3 906.8 757.5 906 760" stroke-width="9" opacity="1"/><path d="M851 695C853.2 694.8 860.5 691.5 864 694C867.5 696.5 869.3 703.2 872 710C874.7 716.8 877 727.5 880 735C883 742.5 886.7 750.2 890 755C893.3 759.8 898.3 762.5 900 764" stroke-width="2.5" opacity="0.9"/><path d="M545 753C542.2 753.8 533.2 755.7 528 758C522.8 760.3 517.5 762.8 514 767C510.5 771.2 508.5 777.5 507 783C505.5 788.5 505 793.5 505 800C505 806.5 505.8 815 507 822C508.2 829 509.7 836 512 842C514.3 848 518 854.7 521 858C524 861.3 528.5 861.3 530 862" stroke-width="11.5" opacity="1"/><path d="M550 779C548 780.2 541.5 782.8 538 786C534.5 789.2 531.2 793.2 529 798C526.8 802.8 525.5 809.3 525 815C524.5 820.7 524.7 826.5 526 832C527.3 837.5 530.7 844.2 533 848C535.3 851.8 538.8 853.8 540 855" stroke-width="4.5" opacity="0.9"/><path d="M770 820C771.8 822.5 777.3 829.7 781 835C784.7 840.3 789.3 846.8 792 852C794.7 857.2 797.3 860.5 797 866C796.7 871.5 793.2 878.8 790 885C786.8 891.2 782.3 897.2 778 903C773.7 908.8 768.7 914.7 764 920C759.3 925.3 752.3 932.5 750 935" stroke-width="13" opacity="1"/><path d="M748 840C750.3 842 757.5 847.3 762 852C766.5 856.7 773.7 862.5 775 868C776.3 873.5 772.5 878.8 770 885C767.5 891.2 763 898.3 760 905C757 911.7 753.3 921.7 752 925" stroke-width="8" opacity="1"/></g></svg>
<div style="left:1306px;top:123px;width:365px;height:865px;background:#535353;border:1px solid #363636;border-radius:5px 5px 2px 2px;box-shadow:0 2px 7px rgba(0,0,0,.5);overflow:hidden"></div>
<div style="left:1307px;top:124px;width:363px;height:16px;background:#424242;border-radius:4px 4px 0 0;"></div>
<div style="left:1307px;top:140px;width:363px;height:35px;background:#424242;"></div>
<div style="left:1307px;top:139px;width:363px;height:1px;background:#3c3c3c;"></div>
<div style="left:1307px;top:174px;width:363px;height:1px;background:#3a3a3a;"></div>
<div style="left:1413px;top:140px;width:48px;height:35px;background:#535353;"></div>
<div style="left:1334px;top:140px;width:1px;height:34px;background:#393939;"></div>
<div style="left:1360px;top:140px;width:1px;height:34px;background:#393939;"></div>
<div style="left:1386px;top:140px;width:1px;height:34px;background:#393939;"></div>
<div style="left:1412px;top:140px;width:1px;height:34px;background:#393939;"></div>
<div style="left:1461px;top:140px;width:1px;height:34px;background:#393939;"></div>
<div style="left:1487px;top:140px;width:1px;height:34px;background:#393939;"></div>
<div style="left:1514px;top:140px;width:1px;height:34px;background:#393939;"></div>
<div style="left:1540px;top:140px;width:1px;height:34px;background:#393939;"></div>
<div style="left:1566px;top:140px;width:1px;height:34px;background:#393939;"></div>
<div style="left:1592px;top:140px;width:1px;height:34px;background:#393939;"></div>
<div style="left:1626px;top:140px;width:1px;height:34px;background:#393939;"></div>
<div class="t" style="left:1319px;top:147px;font-size:14.5px;line-height:20px;color:#a6a6a6;width:15px;overflow:hidden;">內</div>
<div class="t" style="left:1344.5px;top:147px;font-size:14.5px;line-height:20px;color:#a6a6a6;width:15.5px;overflow:hidden;">步</div>
<div class="t" style="left:1371px;top:147px;font-size:14.5px;line-height:20px;color:#a6a6a6;width:15px;overflow:hidden;">調</div>
<div class="t" style="left:1398px;top:147px;font-size:14.5px;line-height:20px;color:#a6a6a6;width:14px;overflow:hidden;">資</div>
<div class="t" style="left:1472.5px;top:147px;font-size:14.5px;line-height:20px;color:#a6a6a6;width:14.5px;overflow:hidden;">顏</div>
<div class="t" style="left:1498.5px;top:147px;font-size:14.5px;line-height:20px;color:#a6a6a6;width:15.5px;overflow:hidden;">色</div>
<div class="t" style="left:1525px;top:147px;font-size:14.5px;line-height:20px;color:#a6a6a6;width:15px;overflow:hidden;">漸</div>
<div class="t" style="left:1551.5px;top:147px;font-size:14.5px;line-height:20px;color:#a6a6a6;width:14.5px;overflow:hidden;">圖</div>
<div class="t" style="left:1577.5px;top:147px;font-size:14.5px;line-height:20px;color:#a6a6a6;width:14.5px;overflow:hidden;">色</div>
<div class="t" style="left:1604px;top:147px;font-size:14.5px;line-height:20px;color:#a6a6a6;width:22px;overflow:hidden;">路徑</div>
<div class="t" style="left:1423.5px;top:147px;font-size:14.5px;line-height:20px;color:#f2f2f2;"><span class="c" style="width:30.00px">圖層</span></div>
<div style="left:1307px;top:215px;width:363px;height:1px;background:#474747;"></div>
<div style="left:1311.5px;top:186px;width:114.5px;height:26px;background:#454545;border:1px solid #5e5e5e;border-radius:3px"></div>
<div class="t" style="left:1339.5px;top:189px;font-size:14.5px;line-height:20px;color:#f0f0f0;"><span class="c" style="width:30.00px">種類</span></div>
<div style="left:1307px;top:251px;width:363px;height:1px;background:#474747;"></div>
<div style="left:1311px;top:223px;width:147px;height:26px;background:#505050;border:1px solid #494949;border-radius:3px"></div>
<div class="t" style="left:1321px;top:226px;font-size:14.5px;line-height:20px;color:#7e7e7e;"><span class="c" style="width:30.00px">正常</span></div>
<div class="t" style="left:1467px;top:224px;font-size:14.5px;line-height:20px;color:#7e7e7e;"><span class="c" style="width:60.00px">不透明度</span>:</div>
<div style="left:1538px;top:223px;width:67px;height:22px;background:#4c4c4c;border:1px solid #474747;border-radius:3px"></div>
<div style="left:1586px;top:224px;width:1px;height:20px;background:#474747;"></div>
<div class="t" style="left:1541.5px;top:226px;font-size:13px;line-height:16px;color:#707070;">100%</div>
<div class="t" style="left:1313.5px;top:260px;font-size:14.5px;line-height:20px;color:#e2e2e2;"><span class="c" style="width:30.00px">鎖定</span>:</div>
<div class="t" style="left:1496px;top:260px;font-size:14.5px;line-height:20px;color:#7e7e7e;"><span class="c" style="width:30.00px">填滿</span>:</div>
<div style="left:1538px;top:259px;width:67px;height:22px;background:#4c4c4c;border:1px solid #474747;border-radius:3px"></div>
<div style="left:1586px;top:260px;width:1px;height:20px;background:#474747;"></div>
<div class="t" style="left:1541.5px;top:262px;font-size:13px;line-height:16px;color:#707070;">100%</div>
<div style="left:1307px;top:288px;width:344px;height:658px;background:#535353;"></div>
<div style="left:1344px;top:288px;width:1.6px;height:658px;background:#4a4a4a;"></div>
<div style="left:1651px;top:291px;width:19px;height:655px;background:#4b4b4b;"></div>
<div style="left:1653.5px;top:659px;width:13.5px;height:265px;background:#6b6b6b;"></div>
<div style="left:1307px;top:306px;width:344px;height:2px;background:#4a4a4a;"></div>
<div style="left:1307px;top:337.4px;width:344px;height:2px;background:#4a4a4a;"></div>
<div style="left:1307px;top:388.9px;width:344px;height:2px;background:#4a4a4a;"></div>
<div style="left:1307px;top:439.2px;width:344px;height:2px;background:#4a4a4a;"></div>
<div style="left:1307px;top:471.4px;width:344px;height:2px;background:#4a4a4a;"></div>
<div style="left:1307px;top:502.7px;width:344px;height:2px;background:#4a4a4a;"></div>
<div style="left:1307px;top:534px;width:344px;height:2px;background:#4a4a4a;"></div>
<div style="left:1307px;top:585.3px;width:344px;height:2px;background:#4a4a4a;"></div>
<div style="left:1307px;top:636.6px;width:344px;height:2px;background:#4a4a4a;"></div>
<div style="left:1307px;top:687.9px;width:344px;height:2px;background:#4a4a4a;"></div>
<div style="left:1307px;top:739.2px;width:344px;height:2px;background:#4a4a4a;"></div>
<div style="left:1307px;top:790.5px;width:344px;height:2px;background:#4a4a4a;"></div>
<div style="left:1307px;top:841.8px;width:344px;height:2px;background:#4a4a4a;"></div>
<div style="left:1307px;top:893.1px;width:344px;height:2px;background:#4a4a4a;"></div>
<div style="left:1397.5px;top:290.5px;width:20px;height:12px;overflow:hidden"><div class="t" style="left:0;top:-7.5px;font-size:14.5px;line-height:20px;color:#e6e6e6">2</div></div>
<div class="t" style="left:1417px;top:314px;font-size:14.5px;line-height:20px;color:#e6e6e6;"><span class="c" style="width:45.00px">資料夾</span> 2</div>
<div style="left:1369.5px;top:346.0px;width:39px;height:39px;background-color:#ffffff;background-image:linear-gradient(45deg,#cfcfcf 25%,transparent 25%,transparent 75%,#cfcfcf 75%),linear-gradient(45deg,#cfcfcf 25%,transparent 25%,transparent 75%,#cfcfcf 75%);background-size:8px 8px;background-position:0 0,4px 4px;border:1px solid #2e2e2e"></div>
<div class="t" style="left:1422.5px;top:356px;font-size:14.5px;line-height:20px;color:#e6e6e6;"><span class="c" style="width:30.00px">圖層</span> 24</div>
<div style="left:1369.5px;top:397.0px;width:39px;height:39px;background-color:#ffffff;background-image:linear-gradient(45deg,#cfcfcf 25%,transparent 25%,transparent 75%,#cfcfcf 75%),linear-gradient(45deg,#cfcfcf 25%,transparent 25%,transparent 75%,#cfcfcf 75%);background-size:8px 8px;background-position:0 0,4px 4px;border:1px solid #2e2e2e"></div>
<div class="t" style="left:1422.5px;top:406px;font-size:14.5px;line-height:20px;color:#e6e6e6;"><span class="c" style="width:30.00px">圖層</span> 3</div>
<div class="t" style="left:1397px;top:448px;font-size:14.5px;line-height:20px;color:#e6e6e6;">1</div>
<div class="t" style="left:1417px;top:479.5px;font-size:14.5px;line-height:20px;color:#e6e6e6;"><span class="c" style="width:45.00px">資料夾</span> 1</div>
<div class="t" style="left:1417px;top:511px;font-size:14.5px;line-height:20px;color:#e6e6e6;"><span class="c" style="width:45.00px">資料夾</span> 12</div>
<div style="left:1390px;top:541.5px;width:39px;height:39px;background-color:#ffffff;background-image:linear-gradient(45deg,#cfcfcf 25%,transparent 25%,transparent 75%,#cfcfcf 75%),linear-gradient(45deg,#cfcfcf 25%,transparent 25%,transparent 75%,#cfcfcf 75%);background-size:8px 8px;background-position:0 0,4px 4px;border:1px solid #2e2e2e"></div>
<div class="t" style="left:1442.5px;top:551px;font-size:14.5px;line-height:20px;color:#e6e6e6;"><span class="c" style="width:30.00px">圖層</span> 32</div>
<div style="left:1390px;top:592.5px;width:39px;height:39px;background-color:#ffffff;background-image:linear-gradient(45deg,#cfcfcf 25%,transparent 25%,transparent 75%,#cfcfcf 75%),linear-gradient(45deg,#cfcfcf 25%,transparent 25%,transparent 75%,#cfcfcf 75%);background-size:8px 8px;background-position:0 0,4px 4px;border:1px solid #2e2e2e"></div>
<div class="t" style="left:1442.5px;top:602px;font-size:14.5px;line-height:20px;color:#e6e6e6;"><span class="c" style="width:30.00px">圖層</span> 29</div>
<div style="left:1390px;top:644.0px;width:39px;height:39px;background-color:#ffffff;background-image:linear-gradient(45deg,#cfcfcf 25%,transparent 25%,transparent 75%,#cfcfcf 75%),linear-gradient(45deg,#cfcfcf 25%,transparent 25%,transparent 75%,#cfcfcf 75%);background-size:8px 8px;background-position:0 0,4px 4px;border:1px solid #2e2e2e"></div>
<div class="t" style="left:1442.5px;top:653.5px;font-size:14.5px;line-height:20px;color:#e6e6e6;"><span class="c" style="width:30.00px">圖層</span> 30 <span class="c" style="width:45.00px">的複製</span> 2</div>
<div style="left:1390px;top:695.5px;width:39px;height:39px;background-color:#ffffff;background-image:linear-gradient(45deg,#cfcfcf 25%,transparent 25%,transparent 75%,#cfcfcf 75%),linear-gradient(45deg,#cfcfcf 25%,transparent 25%,transparent 75%,#cfcfcf 75%);background-size:8px 8px;background-position:0 0,4px 4px;border:1px solid #2e2e2e"></div>
<div class="t" style="left:1442.5px;top:705px;font-size:14.5px;line-height:20px;color:#e6e6e6;"><span class="c" style="width:30.00px">圖層</span> 30 <span class="c" style="width:45.00px">的複製</span></div>
<div style="left:1390px;top:746.5px;width:39px;height:39px;background-color:#ffffff;background-image:linear-gradient(45deg,#cfcfcf 25%,transparent 25%,transparent 75%,#cfcfcf 75%),linear-gradient(45deg,#cfcfcf 25%,transparent 25%,transparent 75%,#cfcfcf 75%);background-size:8px 8px;background-position:0 0,4px 4px;border:1px solid #2e2e2e"></div>
<div style="left:1449px;top:746.5px;width:39px;height:39px;background-color:#ffffff;border:1px solid #2e2e2e"></div>
<div class="t" style="left:1499.5px;top:756px;font-size:14.5px;line-height:20px;color:#e6e6e6;"><span class="c" style="width:30.00px">圖層</span> 28</div>
<div style="left:1369.5px;top:798.5px;width:39px;height:39px;background-color:#ffffff;background-image:linear-gradient(45deg,#cfcfcf 25%,transparent 25%,transparent 75%,#cfcfcf 75%),linear-gradient(45deg,#cfcfcf 25%,transparent 25%,transparent 75%,#cfcfcf 75%);background-size:8px 8px;background-position:0 0,4px 4px;border:1px solid #2e2e2e"></div>
<div class="t" style="left:1422.5px;top:808px;font-size:14.5px;line-height:20px;color:#e6e6e6;"><span class="c" style="width:30.00px">圖層</span> 2</div>
<div style="left:1369.5px;top:849.5px;width:39px;height:39px;background-color:#ffffff;background-image:linear-gradient(45deg,#cfcfcf 25%,transparent 25%,transparent 75%,#cfcfcf 75%),linear-gradient(45deg,#cfcfcf 25%,transparent 25%,transparent 75%,#cfcfcf 75%);background-size:8px 8px;background-position:0 0,4px 4px;border:1px solid #2e2e2e"></div>
<div class="t" style="left:1422.5px;top:859px;font-size:14.5px;line-height:20px;color:#e6e6e6;"><span class="c" style="width:30.00px">圖層</span> 4</div>
<div style="left:1349.5px;top:901.0px;width:39px;height:39px;background-color:#ffffff;border:1px solid #2e2e2e"></div>
<div class="t" style="left:1402px;top:911px;font-size:14.5px;line-height:20px;color:#e6e6e6;"><span class="c" style="width:30.00px">紙張</span></div>
<div style="left:1307px;top:946px;width:363px;height:1px;background:#3f3f3f;"></div>
<div style="left:1307px;top:979px;width:363px;height:1px;background:#3f3f3f;"></div>
<div style="left:4px;top:376px;width:39px;height:31px;background:#363636;border:1px solid #484848;border-radius:3px"></div>
<div style="left:18px;top:903px;width:22.5px;height:22.5px;background:#000000;border:1px solid #f0f0f0"></div>
<div style="left:5.5px;top:890.5px;width:23px;height:23px;background:#d8fcac;border:1px solid #f6f6f6"></div>
<svg id="ico" width="1919" height="1019" viewBox="0 0 1919 1019">
<g stroke="#e6e6e6" stroke-width="1.2" fill="none"><path d="M1765 13.5H1777"/><rect x="1823.5" y="10.5" width="9" height="9" rx="1.5"/><path d="M1826 10.5V9.8a1.4 1.4 0 0 1 1.4-1.4H1833a1.6 1.6 0 0 1 1.6 1.6V15.6a1.4 1.4 0 0 1-1.4 1.4H1832.5"/><path d="M1882 8L1894 20M1894 8L1882 20"/></g>
<g fill="#3c3c3c"><rect x="6" y="45" width="2" height="1"/><rect x="6" y="48" width="2" height="1"/><rect x="6" y="50" width="2" height="1"/><rect x="6" y="53" width="2" height="1"/><rect x="6" y="55" width="2" height="1"/><rect x="6" y="58" width="2" height="1"/><rect x="6" y="60" width="2" height="1"/><rect x="6" y="63" width="2" height="1"/><rect x="6" y="65" width="2" height="1"/><rect x="6" y="68" width="2" height="1"/></g>
<path d="M35.5 49L25 59.5h3.2V67.5h5.2v-7h4.2v7h5.2V59.5H46z" fill="#e2e2e2"/>
<g transform="translate(95.4 47) scale(1.05) translate(-31.6 -382.2)"><path d="M31.9 382c.5.4.3 1.2-.2 2l-7.6 11.9-3.2-2.4 8.7-10.6c.8-.9 1.7-1.4 2.3-.9z" fill="#e2e2e2"/><path d="M20 394.7l3.1 2.3c.5 2.4-1.6 4.2-4.2 4.5-1.6.2-3.4.3-5 .3 1.5-1 2.1-2.2 2.5-3.8.5-1.9 1.7-3.3 3.6-3.3z" fill="#e2e2e2"/></g>
<path d="M109.7 57.2l3.75 3.8l3.75 -3.8" fill="none" stroke="#c6c6c6" stroke-width="1.1"/>
<path d="M177.8 57l3.75 3.8l3.75 -3.8" fill="none" stroke="#c6c6c6" stroke-width="1.1"/>
<path d="M203.5 47.6h9.5l1.8 2.1h10.7v19.1h-22z" fill="#dcdcdc"/><g transform="translate(222.3 51.6) scale(0.84) translate(-31.6 -382.2)"><path d="M31.9 382c.5.4.3 1.2-.2 2l-7.6 11.9-3.2-2.4 8.7-10.6c.8-.9 1.7-1.4 2.3-.9z" fill="#474747"/><path d="M20 394.7l3.1 2.3c.5 2.4-1.6 4.2-4.2 4.5-1.6.2-3.4.3-5 .3 1.5-1 2.1-2.2 2.5-3.8.5-1.9 1.7-3.3 3.6-3.3z" fill="#474747"/></g>
<path d="M447 57.5l4 4l4 -4" fill="none" stroke="#c6c6c6" stroke-width="1.1"/>
<path d="M601 56.5l3.75 3.8l3.75 -3.8" fill="none" stroke="#c6c6c6" stroke-width="1.1"/>
<path d="M770.5 56.5l3.75 3.8l3.75 -3.8" fill="none" stroke="#c6c6c6" stroke-width="1.1"/>
<path d="M955 56.5l3.75 3.8l3.75 -3.8" fill="none" stroke="#c6c6c6" stroke-width="1.1"/>
<path d="M355.5 94.1L363.9 102.5M363.9 94.1L355.5 102.5" stroke="#b4b4b4" stroke-width="1.1" fill="none"/>
<path d="M699.5999999999999 94.1L708 102.5M708 94.1L699.5999999999999 102.5" stroke="#dcdcdc" stroke-width="1.1" fill="none"/>
<path d="M1030.6 94.1L1039 102.5M1039 94.1L1030.6 102.5" stroke="#b4b4b4" stroke-width="1.1" fill="none"/>
<g fill="#6b6b6b"><rect x="66" y="117" width="1" height="1"/><rect x="66" y="119" width="1" height="1"/><rect x="66" y="121" width="1" height="1"/><rect x="66" y="123" width="1" height="1"/><rect x="66" y="125" width="1" height="1"/><rect x="66" y="127" width="1" height="1"/><rect x="66" y="129" width="1" height="1"/><rect x="66" y="131" width="1" height="1"/><rect x="66" y="133" width="1" height="1"/><rect x="66" y="135" width="1" height="1"/><rect x="53" y="130" width="1" height="1"/><rect x="55" y="130" width="1" height="1"/><rect x="57" y="130" width="1" height="1"/><rect x="59" y="130" width="1" height="1"/><rect x="61" y="130" width="1" height="1"/><rect x="63" y="130" width="1" height="1"/><rect x="65" y="130" width="1" height="1"/><rect x="67" y="130" width="1" height="1"/><rect x="69" y="130" width="1" height="1"/><rect x="71" y="130" width="1" height="1"/></g>
<path d="M1904.5 130.5l4.5-4 4.5 4" fill="none" stroke="#9a9a9a" stroke-width="1.1"/><path d="M1905 985l4 3.5 4-3.5" fill="none" stroke="#9a9a9a" stroke-width="1.1"/>
<path d="M329.8 1004.5l3.8 5-3.8 5" fill="none" stroke="#cfcfcf" stroke-width="1.1"/><path d="M357 1004.5l-3.8 5 3.8 5" fill="none" stroke="#6f6f6f" stroke-width="1.1"/><path d="M1886.5 1004.5l3.8 5-3.8 5" fill="none" stroke="#9a9a9a" stroke-width="1.1"/>
<path d="M1637.5 129l-2.8 2.4 2.8 2.4M1641.2 129l-2.8 2.4 2.8 2.4" fill="none" stroke="#dddddd" stroke-width="1.1"/>
<path d="M1656.4 128.4L1663.6 135.6M1663.6 128.4L1656.4 135.6" stroke="#e4e4e4" stroke-width="2" fill="none"/>
<g fill="#c9c9c9"><rect x="1654" y="153" width="10" height="1"/><rect x="1654" y="155" width="10" height="1"/><rect x="1654" y="157" width="10" height="1"/><rect x="1654" y="159" width="10" height="1"/></g>
<circle cx="1326.3" cy="197.5" r="4.2" fill="none" stroke="#e0e0e0" stroke-width="1.7"/><path d="M1329.5 200.8l4 4" stroke="#e0e0e0" stroke-width="2" stroke-linecap="round"/>
<path d="M1413 198l4 4l4 -4" fill="none" stroke="#c6c6c6" stroke-width="1.1"/>
<g fill="none" stroke="#dcdcdc" stroke-width="1.3"><rect x="1444.2" y="192.8" width="13.6" height="11"/></g><path d="M1446 202l3.2-5 2.4 3 1.6-1.8 2.8 3.8z" fill="#dcdcdc"/>
<circle cx="1480.5" cy="198" r="6" fill="none" stroke="#dcdcdc" stroke-width="1.3"/><path d="M1484.7 193.7a6 6 0 0 1-8.4 8.6z" fill="#dcdcdc"/>
<path d="M1505 192.5h12v3.3h-1.2l-.4-1.6h-3.2v8.3l1.6.3v1.2h-5.6v-1.2l1.6-.3v-8.3h-3.2l-.4 1.6H1505z" fill="#dcdcdc"/>
<g fill="none" stroke="#dcdcdc" stroke-width="1.3"><rect x="1535.8" y="193.8" width="10.4" height="9.4"/></g><g fill="#535353" stroke="#dcdcdc" stroke-width="1.1"><rect x="1534" y="192" width="3.4" height="3.4"/><rect x="1544.6" y="192" width="3.4" height="3.4"/><rect x="1534" y="201.6" width="3.4" height="3.4"/><rect x="1544.6" y="201.6" width="3.4" height="3.4"/></g>
<path d="M1569.5 192h5.5l3.3 3.3v9.2h-5" fill="none" stroke="#dcdcdc" stroke-width="1.3"/><path d="M1574.7 192v3.6h3.6" fill="none" stroke="#dcdcdc" stroke-width="1.1"/><rect x="1565.3" y="198" width="7" height="6.8" fill="#dcdcdc"/>
<rect x="1596.3" y="189" width="10" height="20" rx="5" fill="#484848" stroke="#5c5c5c" stroke-width="1"/><circle cx="1601.3" cy="192.5" r="5" fill="#ececec"/>
<path d="M1444.5 236l4 4l4 -4" fill="none" stroke="#6a6a6a" stroke-width="1.1"/>
<path d="M1592 234l3.75 3.8l3.75 -3.8" fill="none" stroke="#6a6a6a" stroke-width="1.1"/>
<g><rect x="1362" y="263" width="14" height="14" fill="#e6e6e6"/><g fill="#4a4a4a"><rect x="1363.5" y="264.5" width="3.7" height="3.7"/><rect x="1370.8" y="264.5" width="3.7" height="3.7"/><rect x="1367.2" y="268.2" width="3.7" height="3.7"/><rect x="1363.5" y="271.8" width="3.7" height="3.7"/><rect x="1370.8" y="271.8" width="3.7" height="3.7"/></g></g>
<g transform="translate(1406 261.6) scale(0.93) translate(-31.6 -382.2)"><path d="M31.9 382c.5.4.3 1.2-.2 2l-7.6 11.9-3.2-2.4 8.7-10.6c.8-.9 1.7-1.4 2.3-.9z" fill="#e2e2e2"/><path d="M20 394.7l3.1 2.3c.5 2.4-1.6 4.2-4.2 4.5-1.6.2-3.4.3-5 .3 1.5-1 2.1-2.2 2.5-3.8.5-1.9 1.7-3.3 3.6-3.3z" fill="#e2e2e2"/></g>
<g stroke="#e2e2e2" stroke-width="1.5" fill="none"><path d="M1423.5 263.5v13M1417 270h13"/></g><path d="M1423.5 261.8l3 3.6h-6zM1423.5 278.2l3-3.6h-6zM1415.3 270l3.6-3v6zM1431.7 270l-3.6-3v6z" fill="#e2e2e2"/>
<g stroke="#e2e2e2" stroke-width="1.5" fill="none"><path d="M1445.7 264.7h8.3l4 4v5h-12.3z"/><path d="M1454 264.7v4h4" stroke-width="1.1"/><path d="M1443 264.7h2M1443 273.7h17.5M1445.7 262.3v2M1445.7 273.7v3M1458 273.7v3" stroke-width="1.2"/><path d="M1457 262.5l.01 0M1459.5 264.2l.01 0M1460.5 266.5l.01 0" stroke-width="1.1" stroke-linecap="square"/></g>
<rect x="1473" y="268.5" width="12" height="9" rx="1" fill="#e2e2e2"/><path d="M1475.7 268.5v-2.7a3.3 3.3 0 0 1 6.6 0v2.7" fill="none" stroke="#e2e2e2" stroke-width="1.6"/><circle cx="1479" cy="272.8" r="1.3" fill="#535353"/>
<path d="M1592 270l3.75 3.8l3.75 -3.8" fill="none" stroke="#6a6a6a" stroke-width="1.1"/>
<path d="M1657.5 305l3.8-3.3 3.8 3.3" fill="none" stroke="#8c8c8c" stroke-width="1.1"/><path d="M1657.5 931l3.8 3.3 3.8-3.3" fill="none" stroke="#8c8c8c" stroke-width="1.1"/>
<clipPath id="c2"><rect x="1307" y="290.5" width="344" height="16"/></clipPath><g clip-path="url(#c2)">
<path d="M1318.2 291.5q7.3-8.4 14.6 0q-7.3 8.4-14.6 0z" fill="#e4e4e4"/><circle cx="1325.5" cy="291.5" r="3.3" fill="#535353"/><circle cx="1325.5" cy="291.5" r="1.7" fill="#e4e4e4"/>
<path d="M1350.5 290.3l5 4.4 5-4.4" fill="none" stroke="#c9c9c9" stroke-width="1.1"/>
<path d="M1364.5 283.5h6.5l1.5 2h10v3.2h-7.8l-1.7 2.1h-8.5z" fill="none" stroke="#dcdcdc" stroke-width="1.2"/><path d="M1363.9 291.2h8.3l1.7-2.1h8.6v9.4h-18.6z" fill="#dcdcdc"/>
</g>
<path d="M1318.5 331.5v-15h15" fill="none" stroke="#4b4b4b" stroke-width="1"/><path d="M1318.5 331.5h15v-15" fill="none" stroke="#696969" stroke-width="1"/>
<path d="M1372 319l3.8 5-3.8 5" fill="none" stroke="#c9c9c9" stroke-width="1.1"/>
<path d="M1384.5 316h6.5l1.5 2h10v13h-18z" fill="#dcdcdc"/>
<path d="M1318.5 373v-15h15" fill="none" stroke="#4b4b4b" stroke-width="1"/><path d="M1318.5 373h15v-15" fill="none" stroke="#696969" stroke-width="1"/>
<path d="M1318.5 424v-15h15" fill="none" stroke="#4b4b4b" stroke-width="1"/><path d="M1318.5 424h15v-15" fill="none" stroke="#696969" stroke-width="1"/>
<path d="M1318.2 458q7.3-8.4 14.6 0q-7.3 8.4-14.6 0z" fill="#e4e4e4"/><circle cx="1325.5" cy="458" r="3.3" fill="#535353"/><circle cx="1325.5" cy="458" r="1.7" fill="#e4e4e4"/>
<path d="M1350.5 455.8l5 4.4 5-4.4" fill="none" stroke="#c9c9c9" stroke-width="1.1"/>
<path d="M1365 450.5h6.5l1.5 2h10v3.2h-7.8l-1.7 2.1h-8.5z" fill="none" stroke="#dcdcdc" stroke-width="1.2"/><path d="M1364.4 458.2h8.3l1.7-2.1h8.6v9.4h-18.6z" fill="#dcdcdc"/>
<path d="M1318.5 497v-15h15" fill="none" stroke="#4b4b4b" stroke-width="1"/><path d="M1318.5 497h15v-15" fill="none" stroke="#696969" stroke-width="1"/>
<path d="M1372 484.5l3.8 5-3.8 5" fill="none" stroke="#c9c9c9" stroke-width="1.1"/>
<path d="M1384.5 481.5h6.5l1.5 2h10v13h-18z" fill="#dcdcdc"/>
<path d="M1318.2 521q7.3-8.4 14.6 0q-7.3 8.4-14.6 0z" fill="#e4e4e4"/><circle cx="1325.5" cy="521" r="3.3" fill="#535353"/><circle cx="1325.5" cy="521" r="1.7" fill="#e4e4e4"/>
<path d="M1370.5 518.8l5 4.4 5-4.4" fill="none" stroke="#c9c9c9" stroke-width="1.1"/>
<path d="M1385 513h6.5l1.5 2h10v3.2h-7.8l-1.7 2.1h-8.5z" fill="none" stroke="#dcdcdc" stroke-width="1.2"/><path d="M1384.4 520.7h8.3l1.7-2.1h8.6v9.4h-18.6z" fill="#dcdcdc"/>
<path d="M1318.5 568.5v-15h15" fill="none" stroke="#4b4b4b" stroke-width="1"/><path d="M1318.5 568.5h15v-15" fill="none" stroke="#696969" stroke-width="1"/>
<path d="M1318.5 619.5v-15h15" fill="none" stroke="#4b4b4b" stroke-width="1"/><path d="M1318.5 619.5h15v-15" fill="none" stroke="#696969" stroke-width="1"/>
<path d="M1318.5 671v-15h15" fill="none" stroke="#4b4b4b" stroke-width="1"/><path d="M1318.5 671h15v-15" fill="none" stroke="#696969" stroke-width="1"/>
<path d="M1318.5 722.5v-15h15" fill="none" stroke="#4b4b4b" stroke-width="1"/><path d="M1318.5 722.5h15v-15" fill="none" stroke="#696969" stroke-width="1"/>
<path d="M1318.5 773.5v-15h15" fill="none" stroke="#4b4b4b" stroke-width="1"/><path d="M1318.5 773.5h15v-15" fill="none" stroke="#696969" stroke-width="1"/>
<g fill="none" stroke="#c8c8c8" stroke-width="1.5"><rect x="1435" y="758.7" width="6.6" height="9.3" rx="3.3"/><rect x="1435" y="765.5" width="6.6" height="9.3" rx="3.3"/></g>
<path d="M1318.2 818q7.3-8.4 14.6 0q-7.3 8.4-14.6 0z" fill="#e4e4e4"/><circle cx="1325.5" cy="818" r="3.3" fill="#535353"/><circle cx="1325.5" cy="818" r="1.7" fill="#e4e4e4"/>
<path d="M1318.5 876.5v-15h15" fill="none" stroke="#4b4b4b" stroke-width="1"/><path d="M1318.5 876.5h15v-15" fill="none" stroke="#696969" stroke-width="1"/>
<path d="M1318.2 920.5q7.3-8.4 14.6 0q-7.3 8.4-14.6 0z" fill="#e4e4e4"/><circle cx="1325.5" cy="920.5" r="3.3" fill="#535353"/><circle cx="1325.5" cy="920.5" r="1.7" fill="#e4e4e4"/>
<g fill="#444444"><rect x="1476" y="981" width="1" height="4"/><rect x="1478" y="981" width="1" height="4"/><rect x="1480" y="981" width="1" height="4"/><rect x="1482" y="981" width="1" height="4"/><rect x="1484" y="981" width="1" height="4"/><rect x="1486" y="981" width="1" height="4"/><rect x="1488" y="981" width="1" height="4"/><rect x="1490" y="981" width="1" height="4"/><rect x="1492" y="981" width="1" height="4"/><rect x="1494" y="981" width="1" height="4"/><rect x="1496" y="981" width="1" height="4"/><rect x="1498" y="981" width="1" height="4"/></g>
<g fill="none" stroke="#9a9a9a" stroke-width=".9" opacity=".8"><path d="M1379.5 373l2-3 1.5 2.5 2-4 .500 4 2-3-1.5 5.5M1380 375.5l3 1.5 3-1 1.5-3"/></g><path d="M1380.5 376.5l2.5 1 1.5-.8" stroke="#5a5a5a" stroke-width="1.2" fill="none"/>
<g fill="none" stroke="#5c96f0" stroke-width="1.1"><path d="M1379 424c1-3 4-4 6-2.5M1378.5 427c1.5 2.5 5 3 8.5 0M1379.5 426c2 1 4.5 1 6-.5"/><path d="M1380 420.5l1-2M1384 419l1-1.5M1391 418.5l1 1.5 1-2" stroke-width=".8" opacity=".8"/></g><ellipse cx="1382.5" cy="426.3" rx="3.3" ry="1.9" fill="#5c96f0" opacity=".85"/>
<g fill="none" stroke="#f4f4f4" stroke-width="1.1"><path d="M1400 562l2-2 3 2 3-1 2 3M1397.5 566l2 .5M1397 572l2 1 2-1.5 2 1.5M1398 616l1 3M1397 622l1 3M1397 626l.5 2"/></g><g fill="none" stroke="#a9a9a9" stroke-width=".7"><path d="M1401 563l2-2 3 2 2 2M1398 569l.5 3M1401 574l1-2M1397.5 612l1.5 3M1397 627l.500 3M1403 710l1 3 1-2.5"/></g>
<path d="M1402.4 660.7l2.5.3.5 2.1-2.4-.3zM1405.7 661l2.2.8 1 2.2-3-.4z" fill="#111111"/>
<g fill="none" stroke="#b6b6b6" stroke-width=".8" opacity=".8"><ellipse cx="1405" cy="769.5" rx="9" ry="9.5"/><path d="M1398 764l5 4 6-5M1399 776l6-6 5 6M1405 760v19" stroke-dasharray="1.5 1.5"/></g>
<path d="M1460.8 763.2l2.5-.7.4 2.2-2.2.7zM1466 763l1.8.4.4 3.2-1.7-1.1z" fill="#111111"/>
<g fill="none" stroke="#4f8df2" stroke-width=".9"><ellipse cx="1384" cy="824.5" rx="4.8" ry="8" transform="rotate(22 1384 824.5)"/><circle cx="1387.4" cy="817" r="1.7" stroke-width="1.3"/><circle cx="1383.5" cy="816.5" r="1.5"/><path d="M1389 813c3-2 5 1 5.5 6s.5 8-.5 10M1381 813c-3 2-5 7-5.5 12M1377 820l-2 2M1376.5 828l-1 2.5M1385 832.5l.5 3.5M1389 822l2 .500M1380.5 833l-2 1"/></g>
<g><ellipse cx="1383.3" cy="875" rx="6" ry="8.8" transform="rotate(24 1383.3 875)" fill="#8a2a10"/><path d="M1384.5 866.3l3-1.2 1.5 2.5-2.2 1.7z" fill="#e9e6e2"/><path d="M1383.2 867l1.2-1 .8 1.5z" fill="#555"/><path d="M1389.5 872.5l3-1M1390 880l1.5 2M1377 879l-1.5 1.5M1385 883.5l.800 2" stroke="#8a2a10" stroke-width="1.3" fill="none"/><path d="M1385.5 868.5l-4.5 13" stroke="#b4532e" stroke-width=".9" stroke-dasharray="1.5 1.2" fill="none"/></g>
<path d="M8.8 84l2.8 2.6-2.8 2.6M12.7 84l2.8 2.6-2.8 2.6" fill="none" stroke="#e6e6e6" stroke-width="1.3"/>
<g fill="#3e3e3e"><rect x="12" y="99" width="1" height="5"/><rect x="14" y="99" width="1" height="5"/><rect x="16" y="99" width="1" height="5"/><rect x="18" y="99" width="1" height="5"/><rect x="20" y="99" width="1" height="5"/><rect x="22" y="99" width="1" height="5"/><rect x="24" y="99" width="1" height="5"/><rect x="26" y="99" width="1" height="5"/><rect x="28" y="99" width="1" height="5"/><rect x="30" y="99" width="1" height="5"/><rect x="32" y="99" width="1" height="5"/><rect x="34" y="99" width="1" height="5"/><rect x="36" y="99" width="1" height="5"/></g>
<path d="M40.2 139.5v3.6h-3.6z" fill="#c4c4c4"/>
<path d="M40.2 172v3.6h-3.6z" fill="#c4c4c4"/>
<path d="M40.2 204.8v3.6h-3.6z" fill="#c4c4c4"/>
<path d="M40.2 237.5v3.6h-3.6z" fill="#c4c4c4"/>
<path d="M40.2 270v3.6h-3.6z" fill="#c4c4c4"/>
<path d="M40.2 335.5v3.6h-3.6z" fill="#c4c4c4"/>
<path d="M40.2 368.3v3.6h-3.6z" fill="#c4c4c4"/>
<path d="M40.2 400.5v3.6h-3.6z" fill="#c4c4c4"/>
<path d="M40.2 433v3.6h-3.6z" fill="#c4c4c4"/>
<path d="M40.2 465.5v3.6h-3.6z" fill="#c4c4c4"/>
<path d="M40.2 498v3.6h-3.6z" fill="#c4c4c4"/>
<path d="M40.2 530.5v3.6h-3.6z" fill="#c4c4c4"/>
<path d="M40.2 563v3.6h-3.6z" fill="#c4c4c4"/>
<path d="M40.2 628v3.6h-3.6z" fill="#c4c4c4"/>
<path d="M40.2 660.5v3.6h-3.6z" fill="#c4c4c4"/>
<path d="M40.2 693v3.6h-3.6z" fill="#c4c4c4"/>
<path d="M40.2 725.5v3.6h-3.6z" fill="#c4c4c4"/>
<path d="M40.2 758v3.6h-3.6z" fill="#c4c4c4"/>
<path d="M40.2 790.5v3.6h-3.6z" fill="#c4c4c4"/>
<path d="M40.2 855.5v3.6h-3.6z" fill="#c4c4c4"/>
<path d="M40.2 985.5v3.6h-3.6z" fill="#c4c4c4"/>
<g stroke="#dedede" stroke-width="1.5" fill="none"><path d="M22.4 125.5v13M15.8 132h13.2"/></g><path d="M22.4 122.8l3.1 3.9h-6.2zM22.4 141.2l3.1-3.9h-6.2zM13.2 132l3.9-3.1v6.2zM31.6 132l-3.9-3.1v6.2z" fill="#dedede"/>
<rect x="14" y="156.3" width="18.5" height="15" fill="none" stroke="#dedede" stroke-width="1.5" stroke-dasharray="4.3 2.4" stroke-dashoffset="2.1"/>
<g fill="none" stroke="#dedede" stroke-width="1.3"><ellipse cx="24.2" cy="194.3" rx="10" ry="6.7" transform="rotate(-14 24.2 194.3)"/><circle cx="17.4" cy="200.8" r="1.9"/><path d="M18.8 202c1.8 1 2.6 3 .8 4.6"/></g>
<path d="M16.3 238l10.8-10.8" stroke="#dedede" stroke-width="5" stroke-linecap="round"/><path d="M24 230.2l2.8-2.8" stroke="#535353" stroke-width="1.5" stroke-linecap="round"/><path d="M22.5 217.9Q22.5 221.3 25.9 221.3Q22.5 221.3 22.5 224.70000000000002Q22.5 221.3 19.1 221.3Q22.5 221.3 22.5 217.9zM32.5 217.5Q32.5 221.3 36.3 221.3Q32.5 221.3 32.5 225.10000000000002Q32.5 221.3 28.7 221.3Q32.5 221.3 32.5 217.5zM33.6 225.6Q33.6 228.4 36.4 228.4Q33.6 228.4 33.6 231.20000000000002Q33.6 228.4 30.8 228.4Q33.6 228.4 33.6 225.6z" fill="#dedede" stroke="#dedede" stroke-width=".5"/>
<g fill="none" stroke="#dedede" stroke-width="2.4"><path d="M16.8 250v16.5h11.4"/><path d="M19.4 255.2h8.8v15.4"/><path d="M10.8 255.2h3.4M30.8 266.5h3.2"/></g>
<g fill="none" stroke="#dedede" stroke-width="1.3"><rect x="14.3" y="287" width="18.6" height="14.8"/><path d="M14.3 287l18.6 14.8M32.9 287l-18.6 14.8"/></g><g fill="#dedede"><circle cx="14.3" cy="287" r="1.3"/><circle cx="32.9" cy="287" r="1.3"/><circle cx="14.3" cy="301.8" r="1.3"/><circle cx="32.9" cy="301.8" r="1.3"/></g>
<path d="M30.2 319.8l-3.3 3.3" stroke="#dedede" stroke-width="4.4" stroke-linecap="round"/><path d="M22.6 321.6l5.8 5.8" stroke="#dedede" stroke-width="3"/><path d="M24.3 325.3l-9 9a1.6 1.6 0 0 0 2.3 2.3l9-9" fill="none" stroke="#dedede" stroke-width="1.2" transform="translate(-1.3 -1.3)"/>
<path d="M17.4 364.6l11-11" stroke="#dedede" stroke-width="6.6" stroke-linecap="round"/><g fill="#535353"><rect x="21.1" y="357.7" width="1.5" height="1.5"/><rect x="23.3" y="355.5" width="1.5" height="1.5"/><rect x="23.3" y="359.9" width="1.5" height="1.5"/><rect x="25.5" y="357.7" width="1.5" height="1.5"/><rect x="21.2" y="362" width="1.5" height="1.5" /></g><path d="M13.7 361.3a6.6 6.6 0 1 1 10.6-8.5" fill="none" stroke="#dedede" stroke-width="1.1" stroke-dasharray="2.4 1.7"/>
<g transform="translate(0 0)"><path d="M31.9 382c.5.4.3 1.2-.2 2l-7.6 11.9-3.2-2.4 8.7-10.6c.8-.9 1.7-1.4 2.3-.9z" fill="#dedede"/><path d="M20 394.7l3.1 2.3c.5 2.4-1.6 4.2-4.2 4.5-1.6.2-3.4.3-5 .3 1.5-1 2.1-2.2 2.5-3.8.5-1.9 1.7-3.3 3.6-3.3z" fill="#dedede"/></g>
<circle cx="24" cy="418.6" r="4.1" fill="#dedede"/><path d="M22.3 421h3.4v6.2h-3.4z" fill="#dedede"/><path d="M15.6 432v-3.4c0-1 .8-1.6 1.8-1.6h13.2c1 0 1.8.6 1.8 1.6v3.4z" fill="#dedede"/><rect x="17" y="433.3" width="14" height="1.1" fill="#dedede"/>
<g transform="translate(1.1 65.1)"><path d="M31.9 382c.5.4.3 1.2-.2 2l-7.6 11.9-3.2-2.4 8.7-10.6c.8-.9 1.7-1.4 2.3-.9z" fill="#dedede"/><path d="M20 394.7l3.1 2.3c.5 2.4-1.6 4.2-4.2 4.5-1.6.2-3.4.3-5 .3 1.5-1 2.1-2.2 2.5-3.8.5-1.9 1.7-3.3 3.6-3.3z" fill="#dedede"/></g>
<path d="M12 455.3l3.4-5.1 3.3 5.1z" fill="#dedede"/><path d="M16.8 452.3c1.6-2.2 4.6-3.2 8-2.2" fill="none" stroke="#dedede" stroke-width="1.2"/><path d="M31.4 455.6c.8 3.2-.7 6.6-4.1 8.6" fill="none" stroke="#dedede" stroke-width="1.2" stroke-dasharray="1.2 1.5"/>
<path d="M25.8 481.4l5.5 6-6.2 6.3-5.7-5.8z" fill="#dedede"/><path d="M19.4 487.9l-5.6 5.6 3.7 4h3.7l3.9-3.8" fill="none" stroke="#dedede" stroke-width="1.2"/><path d="M17.5 497.5h14.5" stroke="#dedede" stroke-width="1.2"/>
<defs><linearGradient id="gr" x1="0" x2="1" y1="0" y2="0"><stop offset="0" stop-color="#2c2c2c"/><stop offset="1" stop-color="#e6e6e6"/></linearGradient></defs><rect x="13.5" y="512.6" width="19.2" height="15.8" fill="url(#gr)" stroke="#dedede" stroke-width="1.2"/>
<path d="M22.6 544.8c1.8 4.2 6.2 7.6 6.2 12a6.2 6.2 0 0 1-12.4 0c0-4.4 4.4-7.8 6.2-12z" fill="#dedede"/>
<g transform="translate(-1.8 194.2)"><path d="M31.9 382c.5.4.3 1.2-.2 2l-7.6 11.9-3.2-2.4 8.7-10.6c.8-.9 1.7-1.4 2.3-.9z" fill="#dedede"/><path d="M20 394.7l3.1 2.3c.5 2.4-1.6 4.2-4.2 4.5-1.6.2-3.4.3-5 .3 1.5-1 2.1-2.2 2.5-3.8.5-1.9 1.7-3.3 3.6-3.3z" fill="#dedede"/></g>
<circle cx="28.5" cy="591.6" r="4.5" fill="none" stroke="#dedede" stroke-width="1.4"/><path d="M32 588.5a4.5 4.5 0 0 1-6.6 6.3z" fill="#dedede"/>
<circle cx="25.4" cy="617" r="6.6" fill="#dedede"/><path d="M21 621.6l-7.2 6.8" stroke="#dedede" stroke-width="2" stroke-linecap="round"/>
<path d="M27.4 642.8l5.8 5.8-2.8 2.8-5.8-5.8z" fill="#dedede"/><path d="M24.3 646.5l5.3 5.3-3.3 6.5-11.7 2.6 2.8-11.6z" fill="none" stroke="#dedede" stroke-width="1.3" stroke-linejoin="round"/><path d="M14.8 660.6l7.4-7.4" stroke="#dedede" stroke-width="1.1"/><circle cx="22.6" cy="652.8" r="1.5" fill="#dedede"/>
<path d="M17 675.4h15.2v4.6h-1.5l-.5-2.5h-4.2v13.6l2.8.4v1.7h-8.6v-1.7l2.8-.4v-13.6h-4.2l-.5 2.5H17z" fill="#dedede"/>
<path d="M18.6 707.6v16.4l4.2-3.8 3.4 6.8 2.4-1.2-3.3-6.6 5.4-.4z" fill="#0a0a0a" stroke="#efefef" stroke-width="1.1" stroke-linejoin="round"/>
<path d="M14.5 757.6l17.2-16.8" stroke="#dedede" stroke-width="1.3"/>
<path d="M19 786.5v-12.5a1.1 1.1 0 0 1 2.2 0v8h1v-10a1.15 1.15 0 0 1 2.3 0v10h1v-8.7a1.1 1.1 0 0 1 2.2 0v9.7h1l1.2-5.8a1.05 1.05 0 0 1 2.1.3l-.9 8.5c-.5 4-3.5 6-7.5 6-3.2 0-5.2-1.3-6.9-3.9l-3.8-6.2c-.6-1 .6-2.1 1.7-1.2z" fill="#dedede"/>
<circle cx="20.8" cy="812" r="7" fill="none" stroke="#dedede" stroke-width="1.5"/><path d="M26 817.4l6.2 6" stroke="#dedede" stroke-width="2.2" stroke-linecap="round"/>
<g fill="#dedede"><circle cx="15.5" cy="846.3" r="2.3"/><circle cx="23" cy="846.3" r="2.3"/><circle cx="30.5" cy="846.3" r="2.3"/></g>
<rect x="9" y="875.5" width="8" height="8" fill="#ffffff" stroke="#d8d8d8" stroke-width="1"/><rect x="3.5" y="869.5" width="9.5" height="9.5" fill="#000000" stroke="#d8d8d8" stroke-width="1"/>
<path d="M30 873.8c4.6-.6 7.4 2 7.2 6.4" fill="none" stroke="#dedede" stroke-width="1.8"/><path d="M28.3 873.9l4.4-4.3v8.2zM37.3 883.4l-4-4.3h8z" fill="#dedede"/>
<rect x="12.3" y="940.8" width="20.8" height="15.8" fill="none" stroke="#dedede" stroke-width="1.2"/><circle cx="22.7" cy="948.7" r="5" fill="none" stroke="#dedede" stroke-width="1.1" stroke-dasharray="1.1 1.1"/>
<rect x="18" y="973.2" width="15" height="10" fill="#535353" stroke="#dedede" stroke-width="1.2"/><rect x="12.3" y="978" width="15" height="10.4" fill="#535353" stroke="#dedede" stroke-width="1.2"/>
<path d="M14.8 1019v-3.5l8-5.5 8.4 5v4" fill="none" stroke="#dedede" stroke-width="1.3"/>
<g fill="none" stroke="#8a8a8a" stroke-width="1.5"><path d="M1423.5 958.7h-2.8a3.8 3.8 0 0 0 0 7.6h2.8M1426.7 958.7h2.8a3.8 3.8 0 0 1 0 7.6h-2.8M1421.3 962.5h7.6"/></g>
<g fill="none" stroke="#d6d6d6" stroke-width="1.35" stroke-linecap="round"><path d="M1461.6 955.7c-2-.9-3.4.1-3.9 2.4l-2.3 10.3c-.3 1.4-1.1 1.8-2.2 1.4"/><path d="M1455.2 959.8h5"/><path d="M1460.6 959.9l4 6.5M1466.2 959.9l-6.8 6.5"/></g>
<path d="M1466.7 970.2h4.6l-2.3 2.4z" fill="#e4e4e4"/>
<rect x="1485" y="956.3" width="16" height="12" fill="#d6d6d6"/><circle cx="1493" cy="962.3" r="3.6" fill="#535353"/>
<circle cx="1526.5" cy="962.3" r="6.2" fill="none" stroke="#d6d6d6" stroke-width="1.3"/><path d="M1531 958a6.2 6.2 0 0 1-8.8 8.8z" fill="#d6d6d6"/><path d="M1533.6 970.2h4.6l-2.3 2.4z" fill="#e4e4e4"/>
<path d="M1553 956.5h5.5l1.3 1.8h8.4v10.2h-15.2z" fill="#d6d6d6"/>
<rect x="1588.3" y="955.8" width="12.6" height="13" rx=".3" fill="none" stroke="#d6d6d6" stroke-width="1.3"/><path d="M1594.6 959v6.6M1591.3 962.3h6.6" stroke="#d6d6d6" stroke-width="1.3"/>
<g fill="none" stroke="#d6d6d6" stroke-width="1.3"><path d="M1622.3 958.8v9.2a1 1 0 0 0 1 1h8a1 1 0 0 0 1-1v-9.2"/><path d="M1620.8 958.3h13M1625 958v-1.8h4.6v1.8"/><path d="M1625.2 961v5.6M1627.3 961v5.6M1629.4 961v5.6" stroke-width="1"/></g>
<defs><pattern id="hat" width="2" height="2" patternUnits="userSpaceOnUse"><rect width="2" height="2" fill="#5a5a5a"/><rect width="1" height="1" fill="#777"/><rect x="1" y="1" width="1" height="1" fill="#777"/></pattern></defs>
<circle cx="638.6" cy="60.3" r="8.7" fill="url(#hat)" stroke="#d4d4d4" stroke-width="1.3"/><path d="M648.6 48.6l2.7 2.3-8.3 9.6-4.2 2.2 1.5-4.5z" fill="#ececec" stroke="#535353" stroke-width=".8"/><path d="M646.7 50.8l2.7 2.3" stroke="#535353" stroke-width=".9"/>
<path d="M804.8 50.8c-7.5 3.5-7.5 10.5 0 14" fill="none" stroke="#8c8c8c" stroke-width="3"/><path d="M816.3 51.3l3.3 2.5-8.8 11-5.3 1.5 1.2-5z" fill="#777777" stroke="#e4e4e4" stroke-width="1.2" stroke-linejoin="round"/><path d="M812.3 59.4l4.3.3 1.3 4.8-3.8-.3z" fill="#777777" stroke="#e4e4e4" stroke-width="1.2" stroke-linejoin="round"/><circle cx="818.8" cy="50.3" r="1.4" fill="#e4e4e4"/>
<path d="M999.1 57.1L999.1 59.3L996.7 59.7L996.1 61.1L997.5 63.2L996 64.7L993.9 63.3L992.5 63.9L992.1 66.3L989.9 66.3L989.5 63.9L988.1 63.3L986 64.7L984.5 63.2L985.9 61.1L985.3 59.7L982.9 59.3L982.9 57.1L985.3 56.7L985.9 55.3L984.5 53.2L986 51.7L988.1 53.1L989.5 52.5L989.9 50.1L992.1 50.1L992.5 52.5L993.9 53.1L996 51.7L997.5 53.2L996.1 55.3L996.7 56.7z" fill="#e2e2e2"/><circle cx="991" cy="58.2" r="3" fill="#535353"/>
<path d="M997.8 67.3h4.6l-2.3 2.6z" fill="#e2e2e2"/>
<path d="M1034.8 52.8l-13 10h15.4" fill="none" stroke="#d4d4d4" stroke-width="1.3"/><path d="M1030.6 56.3c1.8 1.6 2.6 3.8 2.6 6.5" fill="none" stroke="#d4d4d4" stroke-width="1.2"/>
<g fill="none" stroke="#d4d4d4" stroke-width="1.2"><path d="M1133.5 57.5a9 9 0 1 1-7.6-6.3"/><path d="M1129.4 58.3a4.8 4.8 0 1 1-4.2-3"/></g><path d="M1134.4 46.8l2.9 2.4-8.4 10-4.3 2.2 1.5-4.6z" fill="#ececec" stroke="#535353" stroke-width=".8"/><path d="M1132.5 49l2.9 2.4" stroke="#535353" stroke-width=".9"/>
<g fill="none" stroke="#d4d4d4" stroke-width="1.3" stroke-linejoin="round"><path d="M1164.5 58c-1.5-4.5-4.5-7.6-8-7.6-1.8 2.6-.6 6.6 2.4 8.2-2.6 1.8-2 5.8 1.4 7.4 2 1 3.6-.6 4.2-3"/><path d="M1168.5 58c1.5-4.5 4.5-7.6 8-7.6 1.8 2.6.6 6.6-2.4 8.2 2.6 1.8 2 5.8-1.4 7.4-2 1-3.6-.6-4.2-3"/></g><path d="M1166.5 48v22" stroke="#d4d4d4" stroke-width="1" stroke-dasharray="1.5 1.2"/><path d="M1172.2 68h4.6l-2.3 2.6z" fill="#e2e2e2"/>
<g fill="none" stroke="#e2e2e2" stroke-width="2"><path d="M1713 55h-4v10.8h18.2V55h-4"/><path d="M1718.1 61.5V49"/></g><path d="M1718.1 46l4.3 4.8h-8.6z" fill="#e2e2e2"/>
<path d="M1764 45.2a1.3 1.3 0 0 1 1.3 1.3v.7c3 .7 4.7 3.2 4.7 6.3 0 4.6 1.3 6.6 3 8v1.3h-18v-1.3c1.7-1.4 3-3.4 3-8 0-3.1 1.7-5.6 4.7-6.3v-.7a1.3 1.3 0 0 1 1.3-1.3z" fill="#b4b4b4"/><path d="M1761.5 64.6h5a2.5 2.5 0 0 1-5 0z" fill="#b4b4b4"/>
<circle cx="1803.3" cy="57.4" r="6.9" fill="none" stroke="#e2e2e2" stroke-width="1.9"/><path d="M1808.4 62.4l4.7 4.5" stroke="#e2e2e2" stroke-width="2.2" stroke-linecap="round"/>
<g stroke="#e2e2e2" stroke-width="1.3" fill="none"><path d="M1844.8 47.3v3M1836.8 50.5l2.2 2M1852.8 50.5l-2.2 2M1834.6 57.8h3.4M1851.6 57.8h3.4"/><path d="M1842.6 64.6c0-2-2.6-3.2-2.6-6.4a4.8 4.8 0 0 1 9.6 0c0 3.2-2.6 4.4-2.6 6.4z" stroke-width="1.4"/></g><path d="M1842.4 65.6h4.8v1.7a2.4 2.4 0 0 1-4.8 0z" fill="#e2e2e2"/>
<rect x="1870.8" y="51.7" width="19.4" height="15" fill="none" stroke="#e2e2e2" stroke-width="1.5"/><g fill="#e2e2e2"><rect x="1873.5" y="55" width="2.6" height="1.7"/><rect x="1873.5" y="58.2" width="2.6" height="1.7"/><rect x="1873.5" y="61.4" width="2.6" height="1.7"/></g>
<path d="M1904.8 56.2l3.6 3.6l3.6 -3.6" fill="none" stroke="#c6c6c6" stroke-width="1.1"/>
</svg>
</div>
</body></html>
